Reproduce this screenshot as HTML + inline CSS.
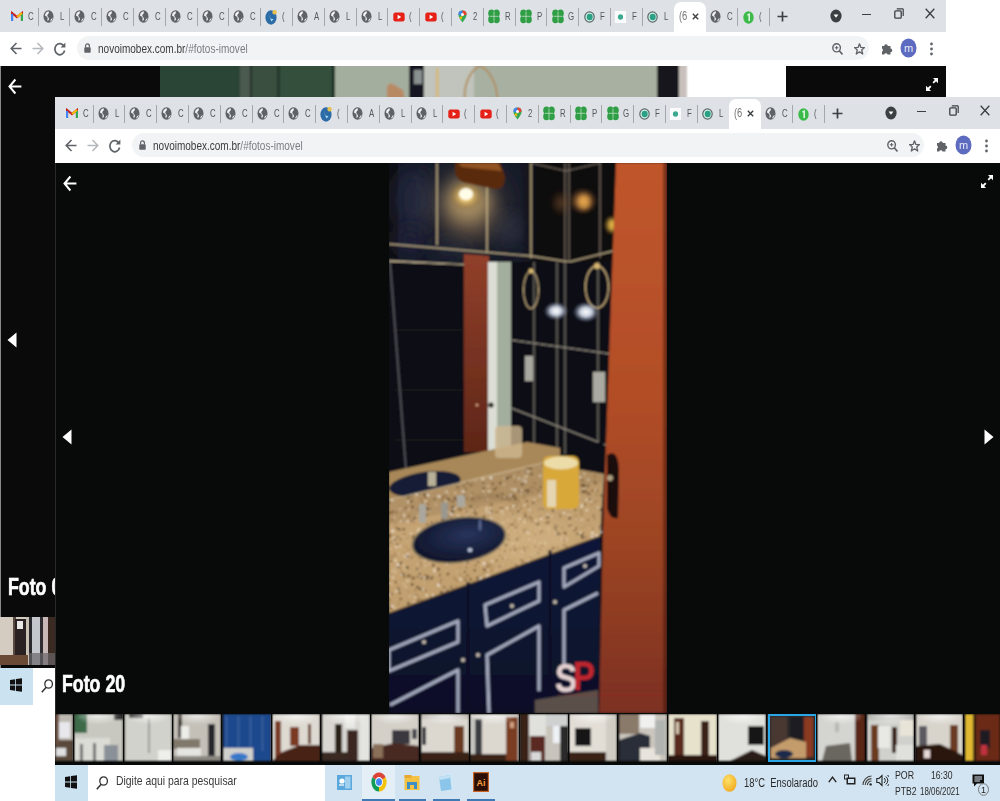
<!DOCTYPE html><html><head><meta charset="utf-8"><style>html,body{margin:0;padding:0;}body{width:1000px;height:801px;position:relative;overflow:hidden;background:#fff;font-family:'Liberation Sans',sans-serif;}#wrap{position:absolute;left:0;top:0;width:1000px;height:801px;filter:blur(0.45px)}</style></head><body><div id="wrap"><div style="position:absolute;left:0px;top:0px;width:946px;height:705px;overflow:hidden"><div style="position:absolute;left:0px;top:0px;width:946px;height:32px;background:#dee1e6"></div><svg style="position:absolute;left:11.2px;top:11px;" width="12" height="11" viewBox="0 0 12 11"><path d="M1 10V2L6 6L11 2V10" fill="none" stroke="#c5221f" stroke-width="2.2"/><path d="M1 10V3" stroke="#4285f4" stroke-width="2.2"/><path d="M11 10V3" stroke="#34a853" stroke-width="2.2"/><path d="M6 6L11 2" stroke="#fbbc04" stroke-width="2"/></svg><div style="position:absolute;left:27.7px;top:11px;font-family:'Liberation Sans',sans-serif;font-size:11.5px;line-height:11.5px;font-weight:400;color:#55595d;white-space:nowrap;transform:scaleX(0.68);transform-origin:0 0;">C</div><div style="position:absolute;left:37.5px;top:7.5px;width:1px;height:18px;background:#a4a8ad"></div><svg style="position:absolute;left:42.5px;top:9.7px;" width="11" height="13" viewBox="0 0 11 13"><ellipse cx="5.5" cy="6.5" rx="5" ry="6.2" fill="#5f6368"/><path d="M5.6 1.2C3.6 1.6 2 3.4 2 5.6C3 6.4 4.4 6.6 4.6 8C4.8 9 4.2 10 4.6 11C6 10.2 6.4 9 5.6 7.8C5 6.8 3.6 6 4.6 4.6C5.4 3.8 6.4 3 5.6 1.2Z" fill="#f2f3f5"/><path d="M9.6 8C8.6 8.6 7.4 9.6 7.2 11.4C8.4 11 9.4 9.8 9.6 8Z" fill="#f2f3f5"/></svg><div style="position:absolute;left:59.5px;top:11px;font-family:'Liberation Sans',sans-serif;font-size:11.5px;line-height:11.5px;font-weight:400;color:#55595d;white-space:nowrap;transform:scaleX(0.68);transform-origin:0 0;">L</div><div style="position:absolute;left:69.3px;top:7.5px;width:1px;height:18px;background:#a4a8ad"></div><svg style="position:absolute;left:74.3px;top:9.7px;" width="11" height="13" viewBox="0 0 11 13"><ellipse cx="5.5" cy="6.5" rx="5" ry="6.2" fill="#5f6368"/><path d="M5.6 1.2C3.6 1.6 2 3.4 2 5.6C3 6.4 4.4 6.6 4.6 8C4.8 9 4.2 10 4.6 11C6 10.2 6.4 9 5.6 7.8C5 6.8 3.6 6 4.6 4.6C5.4 3.8 6.4 3 5.6 1.2Z" fill="#f2f3f5"/><path d="M9.6 8C8.6 8.6 7.4 9.6 7.2 11.4C8.4 11 9.4 9.8 9.6 8Z" fill="#f2f3f5"/></svg><div style="position:absolute;left:91.3px;top:11px;font-family:'Liberation Sans',sans-serif;font-size:11.5px;line-height:11.5px;font-weight:400;color:#55595d;white-space:nowrap;transform:scaleX(0.68);transform-origin:0 0;">C</div><div style="position:absolute;left:101.1px;top:7.5px;width:1px;height:18px;background:#a4a8ad"></div><svg style="position:absolute;left:106.1px;top:9.7px;" width="11" height="13" viewBox="0 0 11 13"><ellipse cx="5.5" cy="6.5" rx="5" ry="6.2" fill="#5f6368"/><path d="M5.6 1.2C3.6 1.6 2 3.4 2 5.6C3 6.4 4.4 6.6 4.6 8C4.8 9 4.2 10 4.6 11C6 10.2 6.4 9 5.6 7.8C5 6.8 3.6 6 4.6 4.6C5.4 3.8 6.4 3 5.6 1.2Z" fill="#f2f3f5"/><path d="M9.6 8C8.6 8.6 7.4 9.6 7.2 11.4C8.4 11 9.4 9.8 9.6 8Z" fill="#f2f3f5"/></svg><div style="position:absolute;left:123.1px;top:11px;font-family:'Liberation Sans',sans-serif;font-size:11.5px;line-height:11.5px;font-weight:400;color:#55595d;white-space:nowrap;transform:scaleX(0.68);transform-origin:0 0;">C</div><div style="position:absolute;left:132.9px;top:7.5px;width:1px;height:18px;background:#a4a8ad"></div><svg style="position:absolute;left:137.9px;top:9.7px;" width="11" height="13" viewBox="0 0 11 13"><ellipse cx="5.5" cy="6.5" rx="5" ry="6.2" fill="#5f6368"/><path d="M5.6 1.2C3.6 1.6 2 3.4 2 5.6C3 6.4 4.4 6.6 4.6 8C4.8 9 4.2 10 4.6 11C6 10.2 6.4 9 5.6 7.8C5 6.8 3.6 6 4.6 4.6C5.4 3.8 6.4 3 5.6 1.2Z" fill="#f2f3f5"/><path d="M9.6 8C8.6 8.6 7.4 9.6 7.2 11.4C8.4 11 9.4 9.8 9.6 8Z" fill="#f2f3f5"/></svg><div style="position:absolute;left:154.9px;top:11px;font-family:'Liberation Sans',sans-serif;font-size:11.5px;line-height:11.5px;font-weight:400;color:#55595d;white-space:nowrap;transform:scaleX(0.68);transform-origin:0 0;">C</div><div style="position:absolute;left:164.7px;top:7.5px;width:1px;height:18px;background:#a4a8ad"></div><svg style="position:absolute;left:169.7px;top:9.7px;" width="11" height="13" viewBox="0 0 11 13"><ellipse cx="5.5" cy="6.5" rx="5" ry="6.2" fill="#5f6368"/><path d="M5.6 1.2C3.6 1.6 2 3.4 2 5.6C3 6.4 4.4 6.6 4.6 8C4.8 9 4.2 10 4.6 11C6 10.2 6.4 9 5.6 7.8C5 6.8 3.6 6 4.6 4.6C5.4 3.8 6.4 3 5.6 1.2Z" fill="#f2f3f5"/><path d="M9.6 8C8.6 8.6 7.4 9.6 7.2 11.4C8.4 11 9.4 9.8 9.6 8Z" fill="#f2f3f5"/></svg><div style="position:absolute;left:186.7px;top:11px;font-family:'Liberation Sans',sans-serif;font-size:11.5px;line-height:11.5px;font-weight:400;color:#55595d;white-space:nowrap;transform:scaleX(0.68);transform-origin:0 0;">C</div><div style="position:absolute;left:196.5px;top:7.5px;width:1px;height:18px;background:#a4a8ad"></div><svg style="position:absolute;left:201.5px;top:9.7px;" width="11" height="13" viewBox="0 0 11 13"><ellipse cx="5.5" cy="6.5" rx="5" ry="6.2" fill="#5f6368"/><path d="M5.6 1.2C3.6 1.6 2 3.4 2 5.6C3 6.4 4.4 6.6 4.6 8C4.8 9 4.2 10 4.6 11C6 10.2 6.4 9 5.6 7.8C5 6.8 3.6 6 4.6 4.6C5.4 3.8 6.4 3 5.6 1.2Z" fill="#f2f3f5"/><path d="M9.6 8C8.6 8.6 7.4 9.6 7.2 11.4C8.4 11 9.4 9.8 9.6 8Z" fill="#f2f3f5"/></svg><div style="position:absolute;left:218.5px;top:11px;font-family:'Liberation Sans',sans-serif;font-size:11.5px;line-height:11.5px;font-weight:400;color:#55595d;white-space:nowrap;transform:scaleX(0.68);transform-origin:0 0;">C</div><div style="position:absolute;left:228.3px;top:7.5px;width:1px;height:18px;background:#a4a8ad"></div><svg style="position:absolute;left:233.3px;top:9.7px;" width="11" height="13" viewBox="0 0 11 13"><ellipse cx="5.5" cy="6.5" rx="5" ry="6.2" fill="#5f6368"/><path d="M5.6 1.2C3.6 1.6 2 3.4 2 5.6C3 6.4 4.4 6.6 4.6 8C4.8 9 4.2 10 4.6 11C6 10.2 6.4 9 5.6 7.8C5 6.8 3.6 6 4.6 4.6C5.4 3.8 6.4 3 5.6 1.2Z" fill="#f2f3f5"/><path d="M9.6 8C8.6 8.6 7.4 9.6 7.2 11.4C8.4 11 9.4 9.8 9.6 8Z" fill="#f2f3f5"/></svg><div style="position:absolute;left:250.3px;top:11px;font-family:'Liberation Sans',sans-serif;font-size:11.5px;line-height:11.5px;font-weight:400;color:#55595d;white-space:nowrap;transform:scaleX(0.68);transform-origin:0 0;">C</div><div style="position:absolute;left:260.1px;top:7.5px;width:1px;height:18px;background:#a4a8ad"></div><svg style="position:absolute;left:265.1px;top:8.5px;" width="13" height="16" viewBox="0 0 13 16"><ellipse cx="6" cy="8.5" rx="5.6" ry="7.2" fill="#2c6ca6"/><path d="M3.6 5L5.6 9.5L8.6 10.2L6.4 12.4Z" fill="#a6daf6"/><circle cx="9.6" cy="3.2" r="2.2" fill="#e8c050"/></svg><div style="position:absolute;left:282.1px;top:11px;font-family:'Liberation Sans',sans-serif;font-size:11.5px;line-height:11.5px;font-weight:400;color:#55595d;white-space:nowrap;transform:scaleX(0.68);transform-origin:0 0;">(</div><div style="position:absolute;left:291.9px;top:7.5px;width:1px;height:18px;background:#a4a8ad"></div><svg style="position:absolute;left:296.9px;top:9.7px;" width="11" height="13" viewBox="0 0 11 13"><ellipse cx="5.5" cy="6.5" rx="5" ry="6.2" fill="#5f6368"/><path d="M5.6 1.2C3.6 1.6 2 3.4 2 5.6C3 6.4 4.4 6.6 4.6 8C4.8 9 4.2 10 4.6 11C6 10.2 6.4 9 5.6 7.8C5 6.8 3.6 6 4.6 4.6C5.4 3.8 6.4 3 5.6 1.2Z" fill="#f2f3f5"/><path d="M9.6 8C8.6 8.6 7.4 9.6 7.2 11.4C8.4 11 9.4 9.8 9.6 8Z" fill="#f2f3f5"/></svg><div style="position:absolute;left:313.9px;top:11px;font-family:'Liberation Sans',sans-serif;font-size:11.5px;line-height:11.5px;font-weight:400;color:#55595d;white-space:nowrap;transform:scaleX(0.68);transform-origin:0 0;">A</div><div style="position:absolute;left:323.7px;top:7.5px;width:1px;height:18px;background:#a4a8ad"></div><svg style="position:absolute;left:328.7px;top:9.7px;" width="11" height="13" viewBox="0 0 11 13"><ellipse cx="5.5" cy="6.5" rx="5" ry="6.2" fill="#5f6368"/><path d="M5.6 1.2C3.6 1.6 2 3.4 2 5.6C3 6.4 4.4 6.6 4.6 8C4.8 9 4.2 10 4.6 11C6 10.2 6.4 9 5.6 7.8C5 6.8 3.6 6 4.6 4.6C5.4 3.8 6.4 3 5.6 1.2Z" fill="#f2f3f5"/><path d="M9.6 8C8.6 8.6 7.4 9.6 7.2 11.4C8.4 11 9.4 9.8 9.6 8Z" fill="#f2f3f5"/></svg><div style="position:absolute;left:345.7px;top:11px;font-family:'Liberation Sans',sans-serif;font-size:11.5px;line-height:11.5px;font-weight:400;color:#55595d;white-space:nowrap;transform:scaleX(0.68);transform-origin:0 0;">L</div><div style="position:absolute;left:355.5px;top:7.5px;width:1px;height:18px;background:#a4a8ad"></div><svg style="position:absolute;left:360.5px;top:9.7px;" width="11" height="13" viewBox="0 0 11 13"><ellipse cx="5.5" cy="6.5" rx="5" ry="6.2" fill="#5f6368"/><path d="M5.6 1.2C3.6 1.6 2 3.4 2 5.6C3 6.4 4.4 6.6 4.6 8C4.8 9 4.2 10 4.6 11C6 10.2 6.4 9 5.6 7.8C5 6.8 3.6 6 4.6 4.6C5.4 3.8 6.4 3 5.6 1.2Z" fill="#f2f3f5"/><path d="M9.6 8C8.6 8.6 7.4 9.6 7.2 11.4C8.4 11 9.4 9.8 9.6 8Z" fill="#f2f3f5"/></svg><div style="position:absolute;left:377.5px;top:11px;font-family:'Liberation Sans',sans-serif;font-size:11.5px;line-height:11.5px;font-weight:400;color:#55595d;white-space:nowrap;transform:scaleX(0.68);transform-origin:0 0;">L</div><div style="position:absolute;left:387.3px;top:7.5px;width:1px;height:18px;background:#a4a8ad"></div><svg style="position:absolute;left:392.8px;top:12px;" width="12" height="10" viewBox="0 0 12 10"><rect x="0.3" y="0.5" width="11.4" height="9" rx="2.2" fill="#e62117"/><path d="M4.6 2.8L8.2 5L4.6 7.2Z" fill="#fff"/></svg><div style="position:absolute;left:409.3px;top:11px;font-family:'Liberation Sans',sans-serif;font-size:11.5px;line-height:11.5px;font-weight:400;color:#55595d;white-space:nowrap;transform:scaleX(0.68);transform-origin:0 0;">(</div><div style="position:absolute;left:419.1px;top:7.5px;width:1px;height:18px;background:#a4a8ad"></div><svg style="position:absolute;left:424.6px;top:12px;" width="12" height="10" viewBox="0 0 12 10"><rect x="0.3" y="0.5" width="11.4" height="9" rx="2.2" fill="#e62117"/><path d="M4.6 2.8L8.2 5L4.6 7.2Z" fill="#fff"/></svg><div style="position:absolute;left:441.1px;top:11px;font-family:'Liberation Sans',sans-serif;font-size:11.5px;line-height:11.5px;font-weight:400;color:#55595d;white-space:nowrap;transform:scaleX(0.68);transform-origin:0 0;">(</div><div style="position:absolute;left:450.9px;top:7.5px;width:1px;height:18px;background:#a4a8ad"></div><svg style="position:absolute;left:458.4px;top:10px;" width="9" height="13" viewBox="0 0 9 13"><path d="M4.5 12.6C2.5 9.8 0.4 7.4 0.4 4.6A4.1 4.1 0 0 1 8.6 4.6C8.6 7.4 6.5 9.8 4.5 12.6Z" fill="#34a853"/><path d="M0.4 4.6A4.1 4.1 0 0 1 4.5 0.5L4.5 6Z" fill="#4285f4"/><path d="M4.5 0.5A4.1 4.1 0 0 1 8.6 4.6L4.5 6Z" fill="#ea4335"/><path d="M1.2 7.3L4.5 6L3.3 9.8Z" fill="#fbbc04"/><circle cx="4.5" cy="4.6" r="1.5" fill="#fff"/></svg><div style="position:absolute;left:472.9px;top:11px;font-family:'Liberation Sans',sans-serif;font-size:11.5px;line-height:11.5px;font-weight:400;color:#55595d;white-space:nowrap;transform:scaleX(0.68);transform-origin:0 0;">2</div><div style="position:absolute;left:482.7px;top:7.5px;width:1px;height:18px;background:#a4a8ad"></div><svg style="position:absolute;left:488.2px;top:9px;" width="12" height="15" viewBox="0 0 12 15"><g fill="#2f9e44"><ellipse cx="3.4" cy="4.2" rx="3.2" ry="3.8"/><ellipse cx="8.6" cy="4.2" rx="3.2" ry="3.8"/><ellipse cx="3.4" cy="10.4" rx="3.2" ry="3.8"/><ellipse cx="8.6" cy="10.4" rx="3.2" ry="3.8"/><rect x="2" y="4" width="8" height="7"/></g><path d="M6 2.5V12.5M1.8 7.3H10.2" stroke="#cfe8d2" stroke-width="0.7"/></svg><div style="position:absolute;left:504.7px;top:11px;font-family:'Liberation Sans',sans-serif;font-size:11.5px;line-height:11.5px;font-weight:400;color:#55595d;white-space:nowrap;transform:scaleX(0.68);transform-origin:0 0;">R</div><div style="position:absolute;left:514.5px;top:7.5px;width:1px;height:18px;background:#a4a8ad"></div><svg style="position:absolute;left:520.0px;top:9px;" width="12" height="15" viewBox="0 0 12 15"><g fill="#2f9e44"><ellipse cx="3.4" cy="4.2" rx="3.2" ry="3.8"/><ellipse cx="8.6" cy="4.2" rx="3.2" ry="3.8"/><ellipse cx="3.4" cy="10.4" rx="3.2" ry="3.8"/><ellipse cx="8.6" cy="10.4" rx="3.2" ry="3.8"/><rect x="2" y="4" width="8" height="7"/></g><path d="M6 2.5V12.5M1.8 7.3H10.2" stroke="#cfe8d2" stroke-width="0.7"/></svg><div style="position:absolute;left:536.5px;top:11px;font-family:'Liberation Sans',sans-serif;font-size:11.5px;line-height:11.5px;font-weight:400;color:#55595d;white-space:nowrap;transform:scaleX(0.68);transform-origin:0 0;">P</div><div style="position:absolute;left:546.3px;top:7.5px;width:1px;height:18px;background:#a4a8ad"></div><svg style="position:absolute;left:551.8px;top:9px;" width="12" height="15" viewBox="0 0 12 15"><g fill="#2f9e44"><ellipse cx="3.4" cy="4.2" rx="3.2" ry="3.8"/><ellipse cx="8.6" cy="4.2" rx="3.2" ry="3.8"/><ellipse cx="3.4" cy="10.4" rx="3.2" ry="3.8"/><ellipse cx="8.6" cy="10.4" rx="3.2" ry="3.8"/><rect x="2" y="4" width="8" height="7"/></g><path d="M6 2.5V12.5M1.8 7.3H10.2" stroke="#cfe8d2" stroke-width="0.7"/></svg><div style="position:absolute;left:568.3px;top:11px;font-family:'Liberation Sans',sans-serif;font-size:11.5px;line-height:11.5px;font-weight:400;color:#55595d;white-space:nowrap;transform:scaleX(0.68);transform-origin:0 0;">G</div><div style="position:absolute;left:578.1px;top:7.5px;width:1px;height:18px;background:#a4a8ad"></div><svg style="position:absolute;left:583.6px;top:11px;" width="11" height="12" viewBox="0 0 11 12"><ellipse cx="5.5" cy="6" rx="4.7" ry="5.1" fill="#d6efe8" stroke="#5a6a68" stroke-width="1.2"/><ellipse cx="5.7" cy="6" rx="3" ry="3.3" fill="#2aa085"/></svg><div style="position:absolute;left:600.1px;top:11px;font-family:'Liberation Sans',sans-serif;font-size:11.5px;line-height:11.5px;font-weight:400;color:#55595d;white-space:nowrap;transform:scaleX(0.68);transform-origin:0 0;">F</div><div style="position:absolute;left:609.9px;top:7.5px;width:1px;height:18px;background:#a4a8ad"></div><svg style="position:absolute;left:615.4px;top:11px;" width="11" height="12" viewBox="0 0 11 12"><rect x="0" y="0" width="11" height="12" fill="#fbfbfb"/><ellipse cx="5.5" cy="6" rx="2.6" ry="2.8" fill="#3aa98f"/></svg><div style="position:absolute;left:631.9px;top:11px;font-family:'Liberation Sans',sans-serif;font-size:11.5px;line-height:11.5px;font-weight:400;color:#55595d;white-space:nowrap;transform:scaleX(0.68);transform-origin:0 0;">F</div><div style="position:absolute;left:641.7px;top:7.5px;width:1px;height:18px;background:#a4a8ad"></div><svg style="position:absolute;left:647.2px;top:11px;" width="11" height="12" viewBox="0 0 11 12"><ellipse cx="5.5" cy="6" rx="4.7" ry="5.1" fill="#d6efe8" stroke="#5a6a68" stroke-width="1.2"/><ellipse cx="5.7" cy="6" rx="3" ry="3.3" fill="#2aa085"/></svg><div style="position:absolute;left:663.7px;top:11px;font-family:'Liberation Sans',sans-serif;font-size:11.5px;line-height:11.5px;font-weight:400;color:#55595d;white-space:nowrap;transform:scaleX(0.68);transform-origin:0 0;">L</div><div style="position:absolute;left:673.5px;top:2px;width:32.2px;height:30px;background:#fff;border-radius:7px 7px 0 0"></div><div style="position:absolute;left:679.0px;top:10px;font-family:'Liberation Sans',sans-serif;font-size:12px;line-height:12px;font-weight:400;color:#777;white-space:nowrap;transform:scaleX(0.78);transform-origin:0 0;">(6</div><svg style="position:absolute;left:692.0px;top:12.5px;" width="7" height="7" viewBox="0 0 7 7"><path d="M0.8 0.8L6.2 6.2M6.2 0.8L0.8 6.2" stroke="#3c4043" stroke-width="1.4"/></svg><svg style="position:absolute;left:710.3px;top:9.7px;" width="11" height="13" viewBox="0 0 11 13"><ellipse cx="5.5" cy="6.5" rx="5" ry="6.2" fill="#5f6368"/><path d="M5.6 1.2C3.6 1.6 2 3.4 2 5.6C3 6.4 4.4 6.6 4.6 8C4.8 9 4.2 10 4.6 11C6 10.2 6.4 9 5.6 7.8C5 6.8 3.6 6 4.6 4.6C5.4 3.8 6.4 3 5.6 1.2Z" fill="#f2f3f5"/><path d="M9.6 8C8.6 8.6 7.4 9.6 7.2 11.4C8.4 11 9.4 9.8 9.6 8Z" fill="#f2f3f5"/></svg><div style="position:absolute;left:727.3px;top:11px;font-family:'Liberation Sans',sans-serif;font-size:11.5px;line-height:11.5px;font-weight:400;color:#55595d;white-space:nowrap;transform:scaleX(0.68);transform-origin:0 0;">C</div><div style="position:absolute;left:737.1px;top:7.5px;width:1px;height:18px;background:#a4a8ad"></div><svg style="position:absolute;left:742.6px;top:11px;" width="11" height="13" viewBox="0 0 11 13"><ellipse cx="5.5" cy="6.5" rx="5.2" ry="6.2" fill="#3dbb4a"/><path d="M4.4 4.2L6.2 3.2V10" fill="none" stroke="#e6f7e7" stroke-width="1.5"/></svg><div style="position:absolute;left:759.1px;top:11px;font-family:'Liberation Sans',sans-serif;font-size:11.5px;line-height:11.5px;font-weight:400;color:#55595d;white-space:nowrap;transform:scaleX(0.68);transform-origin:0 0;">(</div><div style="position:absolute;left:768.9px;top:7.5px;width:1px;height:18px;background:#a4a8ad"></div><svg style="position:absolute;left:777px;top:11px;" width="11" height="11" viewBox="0 0 11 11"><path d="M5.5 0.5V10.5M0.5 5.5H10.5" stroke="#3c4043" stroke-width="1.7"/></svg><svg style="position:absolute;left:830px;top:9px;" width="12" height="14" viewBox="0 0 12 14"><ellipse cx="6" cy="7" rx="5.6" ry="6.5" fill="#3c4043"/><path d="M3.6 5.6H8.4L6 8.8Z" fill="#fff"/></svg><div style="position:absolute;left:862px;top:14px;width:9px;height:1.3px;background:#3c4043"></div><svg style="position:absolute;left:894px;top:8px;" width="10" height="11" viewBox="0 0 10 11"><rect x="0.8" y="2.8" width="6.4" height="7.4" fill="none" stroke="#3c4043" stroke-width="1.3" rx="1"/><path d="M2.8 0.8H8.4Q9.2 0.8 9.2 1.6V8" fill="none" stroke="#3c4043" stroke-width="1.2"/></svg><svg style="position:absolute;left:925px;top:8px;" width="10" height="11" viewBox="0 0 10 11"><path d="M0.7 0.7L9.3 10.3M9.3 0.7L0.7 10.3" stroke="#3c4043" stroke-width="1.3"/></svg><div style="position:absolute;left:0px;top:32px;width:946px;height:34px;background:#fff"></div><svg style="position:absolute;left:10px;top:42px;" width="12" height="13" viewBox="0 0 12 13"><path d="M11.5 6.5H1.5M6.5 1L1.2 6.5L6.5 12" fill="none" stroke="#5f6368" stroke-width="1.6"/></svg><svg style="position:absolute;left:32px;top:42px;" width="12" height="13" viewBox="0 0 12 13"><path d="M0.5 6.5H10.5M5.5 1L10.8 6.5L5.5 12" fill="none" stroke="#b4b7bb" stroke-width="1.5"/></svg><svg style="position:absolute;left:54px;top:42px;" width="12" height="14" viewBox="0 0 12 14"><path d="M10 4.2A4.9 5.6 0 1 0 10.6 8.5" fill="none" stroke="#5f6368" stroke-width="1.7"/><path d="M11.4 0.6V5.6H6.6Z" fill="#5f6368"/></svg><div style="position:absolute;left:77px;top:36px;width:792px;height:24px;background:#f1f3f4;border-radius:12px"></div><svg style="position:absolute;left:84px;top:43px;" width="7" height="10" viewBox="0 0 7 10"><path d="M1.6 4.5V3A1.9 2.2 0 0 1 5.4 3V4.5" fill="none" stroke="#5f6368" stroke-width="1.2"/><rect x="0.3" y="4.3" width="6.4" height="5.5" rx="0.8" fill="#5f6368"/></svg><div style="position:absolute;left:98px;top:42px;font-family:'Liberation Sans',sans-serif;font-size:13px;line-height:13px;font-weight:400;color:#3c3c3c;white-space:nowrap;transform:scaleX(0.77);transform-origin:0 0;"><span style="color:#3c3c3c">novoimobex.com.br</span><span style="color:#7a7e82">/#fotos-imovel</span></div><svg style="position:absolute;left:832px;top:43px;" width="11" height="12" viewBox="0 0 11 12"><ellipse cx="4.6" cy="4.8" rx="3.8" ry="4.1" fill="none" stroke="#5f6368" stroke-width="1.4"/><path d="M7.3 7.8L10.4 11.4" stroke="#5f6368" stroke-width="1.6"/><path d="M4.6 3V6.6M2.8 4.8H6.4" stroke="#5f6368" stroke-width="1.1"/></svg><svg style="position:absolute;left:854px;top:43px;" width="11" height="12" viewBox="0 0 11 12"><path d="M5.5 0.8L6.9 4.4L10.5 4.6L7.7 7L8.7 11L5.5 8.8L2.3 11L3.3 7L0.5 4.6L4.1 4.4Z" fill="none" stroke="#5f6368" stroke-width="1.3" stroke-linejoin="round"/></svg><svg style="position:absolute;left:881px;top:42px;" width="12" height="13" viewBox="0 0 12 13"><path d="M1 4H3.2A1.8 1.8 0 0 1 6.8 4H9.5V6.6A1.8 1.8 0 0 1 9.5 10.2V12.5H6.6A1.8 1.8 0 0 0 3.2 12.5H1V9.6A1.8 1.8 0 0 0 1 6.4Z" fill="#5f6368"/></svg><svg style="position:absolute;left:900px;top:38px;" width="17" height="20" viewBox="0 0 17 20"><ellipse cx="8.5" cy="10" rx="8" ry="9.6" fill="#5c6bc0"/><text x="8.5" y="13.6" text-anchor="middle" font-family="Liberation Sans" font-size="11" fill="#e8eaf6">m</text></svg><svg style="position:absolute;left:929px;top:42px;" width="5" height="14" viewBox="0 0 5 14"><circle cx="2.5" cy="2" r="1.4" fill="#5f6368"/><circle cx="2.5" cy="7" r="1.4" fill="#5f6368"/><circle cx="2.5" cy="12" r="1.4" fill="#5f6368"/></svg><div style="position:absolute;left:0px;top:66px;width:946px;height:639px;background:#0a0a0a"></div><svg style="position:absolute;left:160px;top:66px;" width="626" height="32" viewBox="0 0 626 32"><defs><filter id="ob"><feGaussianBlur stdDeviation="0.8"/></filter></defs><g filter="url(#ob)"><rect x="-2" y="-2" width="630" height="36" fill="#a8b0a2"/><rect x="-2" y="-2" width="82" height="36" fill="#2c4434"/><rect x="80" y="-2" width="10" height="36" fill="#4c5a50"/><rect x="90" y="-2" width="2" height="36" fill="#1e2a22"/><rect x="92" y="-2" width="25" height="36" fill="#3a5040"/><rect x="117" y="-2" width="3" height="36" fill="#22342a"/><rect x="120" y="-2" width="52" height="36" fill="#34503c"/><rect x="172" y="-2" width="3" height="36" fill="#18281e"/><rect x="175" y="-2" width="74" height="36" fill="#a4ae9e"/><polygon points="227,20 231,17 243,24 245,34 227,34" fill="#b88a64"/><rect x="249" y="-2" width="15" height="36" fill="#141820"/><rect x="254" y="4" width="8" height="14" fill="#8a9090"/><rect x="264" y="-2" width="50" height="36" fill="#c0c4bc"/><rect x="276" y="2" width="2.5" height="32" fill="#d8b870"/><path d="M305 34C303 20 310 4 320 0C330 4 338 20 337 34" fill="none" stroke="#b09060" stroke-width="2"/><rect x="314" y="-2" width="183" height="36" fill="#a8b0a2" opacity="0"/><rect x="497" y="-2" width="22" height="36" fill="#18181e"/><rect x="519" y="-2" width="8" height="36" fill="#c8c0bc"/><rect x="527" y="-2" width="101" height="36" fill="#ffffff"/></g></svg><svg style="position:absolute;left:8px;top:78px;" width="14" height="17" viewBox="0 0 14 17"><path d="M13.4 8.5H1.8M7.4 1.5L1.5 8.5L7.4 15.5" fill="none" stroke="#fff" stroke-width="2"/></svg><svg style="position:absolute;left:925px;top:77px;" width="14" height="15" viewBox="0 0 14 15"><path d="M8 1H13V6.2Z M6 14H1V8.8Z" fill="#fff"/><path d="M12 2L8.2 5.8M2 13L5.8 9.2" stroke="#fff" stroke-width="1.8"/></svg><svg style="position:absolute;left:7px;top:332px;" width="10" height="16" viewBox="0 0 10 16"><path d="M9.5 0.5V15.5L0.5 8Z" fill="#fff"/></svg><svg style="position:absolute;left:929px;top:332px;" width="10" height="16" viewBox="0 0 10 16"><path d="M0.5 0.5V15.5L9.5 8Z" fill="#fff"/></svg><div style="position:absolute;left:0px;top:66px;width:1px;height:639px;background:#8a8a8a"></div><div style="position:absolute;left:8px;top:575px;font-family:'Liberation Sans',sans-serif;font-size:24px;line-height:24px;font-weight:700;color:#fff;white-space:nowrap;transform:scaleX(0.74);transform-origin:0 0;-webkit-text-stroke:0.7px #fff;">Foto 0</div><svg style="position:absolute;left:0px;top:617px;" width="55" height="48" viewBox="0 0 55 48"><defs><filter id="otb"><feGaussianBlur stdDeviation="0.7"/></filter></defs><g filter="url(#otb)"><rect x="-2" y="-2" width="60" height="52" fill="#d4ccc0"/><rect x="13" y="-2" width="3" height="52" fill="#5a4a40"/><rect x="15" y="2" width="11" height="44" fill="#2a2220"/><rect x="17" y="4" width="6" height="8" fill="#e8e8e8"/><rect x="26" y="-2" width="3" height="52" fill="#c8c0b4"/><rect x="29" y="-2" width="3" height="52" fill="#2a2a2e"/><rect x="32" y="-2" width="8" height="52" fill="#c4c8cc"/><rect x="40" y="-2" width="3" height="52" fill="#2e2e32"/><rect x="43" y="-2" width="5" height="52" fill="#c8b8b8"/><rect x="48" y="-2" width="9" height="52" fill="#3a2a24"/><rect x="-2" y="38" width="30" height="12" fill="#6a4a36"/><rect x="29" y="36" width="28" height="12" fill="#6a6468" opacity="0.7"/></g></svg><div style="position:absolute;left:0px;top:668px;width:946px;height:37px;background:#d2e4f1"></div><div style="position:absolute;left:0px;top:668px;width:33px;height:37px;background:#cbe3f1"></div><div style="position:absolute;left:33px;top:668px;width:237px;height:37px;background:#fff"></div><svg style="position:absolute;left:10px;top:678px;" width="12" height="14" viewBox="0 0 12 14"><g fill="#111"><path d="M0 2L5.2 1.2V6.6H0Z"/><path d="M6 1.1L12 0.2V6.6H6Z"/><path d="M0 7.4H5.2V12.8L0 12Z"/><path d="M6 7.4H12V13.8L6 12.9Z"/></g></svg><svg style="position:absolute;left:41px;top:679px;" width="12" height="14" viewBox="0 0 12 14"><ellipse cx="7.6" cy="5" rx="3.8" ry="4.2" fill="none" stroke="#333" stroke-width="1.3"/><path d="M5.2 8.2L0.8 13.2" stroke="#333" stroke-width="1.5"/></svg><div style="position:absolute;left:61px;top:677px;font-family:'Liberation Sans',sans-serif;font-size:13px;line-height:13px;font-weight:400;color:#3a3a3a;white-space:nowrap;transform:scaleX(0.8);transform-origin:0 0;">Digite aqui para pesquisar</div><svg style="position:absolute;left:282px;top:678px;" width="15" height="15" viewBox="0 0 15 15"><rect x="0" y="0" width="15" height="15" fill="#5aa8dc"/><rect x="8" y="1.5" width="5.5" height="12" fill="#9fd0ef"/><circle cx="5" cy="6" r="2.6" fill="#fff"/><path d="M2 10H7" stroke="#fff" stroke-width="1.2"/></svg><div style="position:absolute;left:307px;top:668px;width:33px;height:37px;background:#e4eef6"></div><svg style="position:absolute;left:316px;top:675px;" width="16" height="20" viewBox="0 0 16 20"><path d="M8 10L1.42 5.20A7.6 9.6 0 0 1 14.58 5.20Z" fill="#db4437"/><path d="M8 10L14.58 5.20A7.6 9.6 0 0 1 8.00 19.60Z" fill="#f4c20d"/><path d="M8 10L8.00 19.60A7.6 9.6 0 0 1 1.42 5.20Z" fill="#0f9d58"/><ellipse cx="8" cy="10" rx="3.9" ry="4.9" fill="#fff"/><ellipse cx="8" cy="10" rx="3" ry="3.8" fill="#4285f4"/></svg><svg style="position:absolute;left:349px;top:676.5px;" width="16" height="17" viewBox="0 0 16 17"><rect x="0.5" y="2" width="15" height="14" fill="#f3c242"/><rect x="0.5" y="1" width="7" height="3" fill="#e8a932"/><rect x="3" y="8" width="10" height="7" fill="#3d8fc8"/><rect x="6" y="11" width="4" height="4" fill="#f3c242"/></svg><svg style="position:absolute;left:383px;top:676px;" width="17" height="18" viewBox="0 0 17 18"><path d="M4 2L15 0.5L16.5 15L6 17.5Z" fill="#cfe6f5"/><path d="M1 4L12 2L13.5 16.5L3 18Z" fill="#8cc5ea"/><path d="M1 4L12 2L12.3 5L1.4 7Z" fill="#bfe0f5"/></svg><svg style="position:absolute;left:418px;top:675px;" width="16" height="20" viewBox="0 0 16 20"><rect x="0" y="0" width="16" height="20" fill="#c8662a"/><rect x="1.2" y="1.2" width="13.6" height="17.6" fill="#2c0f04"/><text x="8" y="14" text-anchor="middle" font-family="Liberation Sans" font-weight="700" font-size="9" fill="#f7a03c">Ai</text></svg><div style="position:absolute;left:307px;top:702px;width:33px;height:3px;background:#3f7ab5"></div><div style="position:absolute;left:344px;top:702px;width:27px;height:3px;background:#3f7ab5"></div><div style="position:absolute;left:378px;top:702px;width:27px;height:3px;background:#3f7ab5"></div><div style="position:absolute;left:412px;top:702px;width:28px;height:3px;background:#3f7ab5"></div><svg style="position:absolute;left:667px;top:676.5px;" width="15" height="18" viewBox="0 0 15 18"><defs><radialGradient id="sun" cx="0.4" cy="0.35" r="0.7"><stop offset="0" stop-color="#fde26a"/><stop offset="1" stop-color="#f2a81e"/></radialGradient></defs><ellipse cx="7.5" cy="9" rx="7" ry="8.8" fill="url(#sun)"/></svg><div style="position:absolute;left:689px;top:680px;font-family:'Liberation Sans',sans-serif;font-size:12px;line-height:12px;font-weight:400;color:#2a2a2a;white-space:nowrap;transform:scaleX(0.785);transform-origin:0 0;">18°C&nbsp;&nbsp;Ensolarado</div><svg style="position:absolute;left:773px;top:679px;" width="9" height="7" viewBox="0 0 9 7"><path d="M0.8 6.2L4.5 1.2L8.2 6.2" fill="none" stroke="#222" stroke-width="1.4"/></svg><svg style="position:absolute;left:789px;top:677px;" width="12" height="12" viewBox="0 0 12 12"><rect x="2.5" y="3.5" width="9" height="7" fill="#222"/><rect x="0.5" y="1" width="4" height="4" fill="none" stroke="#222" stroke-width="1"/><rect x="4" y="5" width="6" height="4" fill="#d2e4f1"/></svg><svg style="position:absolute;left:807px;top:678px;" width="10" height="11" viewBox="0 0 10 11"><path d="M1 10A9 9 0 0 1 9.5 1" fill="none" stroke="#444" stroke-width="1.1"/><path d="M3.2 10A6.4 6.4 0 0 1 9.5 3.6" fill="none" stroke="#444" stroke-width="1.1"/><path d="M5.4 10A4 4 0 0 1 9.5 6" fill="none" stroke="#444" stroke-width="1.1"/><circle cx="8.6" cy="9.4" r="1.2" fill="#222"/></svg><svg style="position:absolute;left:821px;top:677px;" width="13" height="13" viewBox="0 0 13 13"><path d="M0.8 4.5H3L6 1.5V11.5L3 8.5H0.8Z" fill="none" stroke="#222" stroke-width="1.1"/><path d="M8 4A3 3 0 0 1 8 9M9.8 2.5A5 5 0 0 1 9.8 10.5M11.6 1A7 7 0 0 1 11.6 12" fill="none" stroke="#222" stroke-width="1"/></svg><div style="position:absolute;left:840px;top:673px;font-family:'Liberation Sans',sans-serif;font-size:11px;line-height:11px;font-weight:400;color:#2a2a2a;white-space:nowrap;transform:scaleX(0.8);transform-origin:0 0;">POR</div><div style="position:absolute;left:840px;top:688.5px;font-family:'Liberation Sans',sans-serif;font-size:11px;line-height:11px;font-weight:400;color:#2a2a2a;white-space:nowrap;transform:scaleX(0.78);transform-origin:0 0;">PTB2</div><div style="position:absolute;left:876px;top:673px;font-family:'Liberation Sans',sans-serif;font-size:11px;line-height:11px;font-weight:400;color:#2a2a2a;white-space:nowrap;transform:scaleX(0.78);transform-origin:0 0;">16:30</div><div style="position:absolute;left:865px;top:688.5px;font-family:'Liberation Sans',sans-serif;font-size:11px;line-height:11px;font-weight:400;color:#2a2a2a;white-space:nowrap;transform:scaleX(0.72);transform-origin:0 0;">18/06/2021</div><svg style="position:absolute;left:917px;top:677px;" width="17" height="22" viewBox="0 0 17 22"><path d="M0.5 0.5H12V9.5H5L2 12.5V9.5H0.5Z" fill="#111"/><path d="M2.5 3H10M2.5 5H10M2.5 7H8" stroke="#d9e5f1" stroke-width="1"/><ellipse cx="11.5" cy="15.5" rx="5" ry="5.8" fill="#d2e4f1" stroke="#777" stroke-width="1"/><text x="11.5" y="19" text-anchor="middle" font-family="Liberation Sans" font-size="9" fill="#222">1</text></svg></div><div style="position:absolute;left:55px;top:97px;width:946px;height:705px;overflow:hidden"><div style="position:absolute;left:0px;top:0px;width:946px;height:32px;background:#dee1e6"></div><svg style="position:absolute;left:11.2px;top:11px;" width="12" height="11" viewBox="0 0 12 11"><path d="M1 10V2L6 6L11 2V10" fill="none" stroke="#c5221f" stroke-width="2.2"/><path d="M1 10V3" stroke="#4285f4" stroke-width="2.2"/><path d="M11 10V3" stroke="#34a853" stroke-width="2.2"/><path d="M6 6L11 2" stroke="#fbbc04" stroke-width="2"/></svg><div style="position:absolute;left:27.7px;top:11px;font-family:'Liberation Sans',sans-serif;font-size:11.5px;line-height:11.5px;font-weight:400;color:#55595d;white-space:nowrap;transform:scaleX(0.68);transform-origin:0 0;">C</div><div style="position:absolute;left:37.5px;top:7.5px;width:1px;height:18px;background:#a4a8ad"></div><svg style="position:absolute;left:42.5px;top:9.7px;" width="11" height="13" viewBox="0 0 11 13"><ellipse cx="5.5" cy="6.5" rx="5" ry="6.2" fill="#5f6368"/><path d="M5.6 1.2C3.6 1.6 2 3.4 2 5.6C3 6.4 4.4 6.6 4.6 8C4.8 9 4.2 10 4.6 11C6 10.2 6.4 9 5.6 7.8C5 6.8 3.6 6 4.6 4.6C5.4 3.8 6.4 3 5.6 1.2Z" fill="#f2f3f5"/><path d="M9.6 8C8.6 8.6 7.4 9.6 7.2 11.4C8.4 11 9.4 9.8 9.6 8Z" fill="#f2f3f5"/></svg><div style="position:absolute;left:59.5px;top:11px;font-family:'Liberation Sans',sans-serif;font-size:11.5px;line-height:11.5px;font-weight:400;color:#55595d;white-space:nowrap;transform:scaleX(0.68);transform-origin:0 0;">L</div><div style="position:absolute;left:69.3px;top:7.5px;width:1px;height:18px;background:#a4a8ad"></div><svg style="position:absolute;left:74.3px;top:9.7px;" width="11" height="13" viewBox="0 0 11 13"><ellipse cx="5.5" cy="6.5" rx="5" ry="6.2" fill="#5f6368"/><path d="M5.6 1.2C3.6 1.6 2 3.4 2 5.6C3 6.4 4.4 6.6 4.6 8C4.8 9 4.2 10 4.6 11C6 10.2 6.4 9 5.6 7.8C5 6.8 3.6 6 4.6 4.6C5.4 3.8 6.4 3 5.6 1.2Z" fill="#f2f3f5"/><path d="M9.6 8C8.6 8.6 7.4 9.6 7.2 11.4C8.4 11 9.4 9.8 9.6 8Z" fill="#f2f3f5"/></svg><div style="position:absolute;left:91.3px;top:11px;font-family:'Liberation Sans',sans-serif;font-size:11.5px;line-height:11.5px;font-weight:400;color:#55595d;white-space:nowrap;transform:scaleX(0.68);transform-origin:0 0;">C</div><div style="position:absolute;left:101.1px;top:7.5px;width:1px;height:18px;background:#a4a8ad"></div><svg style="position:absolute;left:106.1px;top:9.7px;" width="11" height="13" viewBox="0 0 11 13"><ellipse cx="5.5" cy="6.5" rx="5" ry="6.2" fill="#5f6368"/><path d="M5.6 1.2C3.6 1.6 2 3.4 2 5.6C3 6.4 4.4 6.6 4.6 8C4.8 9 4.2 10 4.6 11C6 10.2 6.4 9 5.6 7.8C5 6.8 3.6 6 4.6 4.6C5.4 3.8 6.4 3 5.6 1.2Z" fill="#f2f3f5"/><path d="M9.6 8C8.6 8.6 7.4 9.6 7.2 11.4C8.4 11 9.4 9.8 9.6 8Z" fill="#f2f3f5"/></svg><div style="position:absolute;left:123.1px;top:11px;font-family:'Liberation Sans',sans-serif;font-size:11.5px;line-height:11.5px;font-weight:400;color:#55595d;white-space:nowrap;transform:scaleX(0.68);transform-origin:0 0;">C</div><div style="position:absolute;left:132.9px;top:7.5px;width:1px;height:18px;background:#a4a8ad"></div><svg style="position:absolute;left:137.9px;top:9.7px;" width="11" height="13" viewBox="0 0 11 13"><ellipse cx="5.5" cy="6.5" rx="5" ry="6.2" fill="#5f6368"/><path d="M5.6 1.2C3.6 1.6 2 3.4 2 5.6C3 6.4 4.4 6.6 4.6 8C4.8 9 4.2 10 4.6 11C6 10.2 6.4 9 5.6 7.8C5 6.8 3.6 6 4.6 4.6C5.4 3.8 6.4 3 5.6 1.2Z" fill="#f2f3f5"/><path d="M9.6 8C8.6 8.6 7.4 9.6 7.2 11.4C8.4 11 9.4 9.8 9.6 8Z" fill="#f2f3f5"/></svg><div style="position:absolute;left:154.9px;top:11px;font-family:'Liberation Sans',sans-serif;font-size:11.5px;line-height:11.5px;font-weight:400;color:#55595d;white-space:nowrap;transform:scaleX(0.68);transform-origin:0 0;">C</div><div style="position:absolute;left:164.7px;top:7.5px;width:1px;height:18px;background:#a4a8ad"></div><svg style="position:absolute;left:169.7px;top:9.7px;" width="11" height="13" viewBox="0 0 11 13"><ellipse cx="5.5" cy="6.5" rx="5" ry="6.2" fill="#5f6368"/><path d="M5.6 1.2C3.6 1.6 2 3.4 2 5.6C3 6.4 4.4 6.6 4.6 8C4.8 9 4.2 10 4.6 11C6 10.2 6.4 9 5.6 7.8C5 6.8 3.6 6 4.6 4.6C5.4 3.8 6.4 3 5.6 1.2Z" fill="#f2f3f5"/><path d="M9.6 8C8.6 8.6 7.4 9.6 7.2 11.4C8.4 11 9.4 9.8 9.6 8Z" fill="#f2f3f5"/></svg><div style="position:absolute;left:186.7px;top:11px;font-family:'Liberation Sans',sans-serif;font-size:11.5px;line-height:11.5px;font-weight:400;color:#55595d;white-space:nowrap;transform:scaleX(0.68);transform-origin:0 0;">C</div><div style="position:absolute;left:196.5px;top:7.5px;width:1px;height:18px;background:#a4a8ad"></div><svg style="position:absolute;left:201.5px;top:9.7px;" width="11" height="13" viewBox="0 0 11 13"><ellipse cx="5.5" cy="6.5" rx="5" ry="6.2" fill="#5f6368"/><path d="M5.6 1.2C3.6 1.6 2 3.4 2 5.6C3 6.4 4.4 6.6 4.6 8C4.8 9 4.2 10 4.6 11C6 10.2 6.4 9 5.6 7.8C5 6.8 3.6 6 4.6 4.6C5.4 3.8 6.4 3 5.6 1.2Z" fill="#f2f3f5"/><path d="M9.6 8C8.6 8.6 7.4 9.6 7.2 11.4C8.4 11 9.4 9.8 9.6 8Z" fill="#f2f3f5"/></svg><div style="position:absolute;left:218.5px;top:11px;font-family:'Liberation Sans',sans-serif;font-size:11.5px;line-height:11.5px;font-weight:400;color:#55595d;white-space:nowrap;transform:scaleX(0.68);transform-origin:0 0;">C</div><div style="position:absolute;left:228.3px;top:7.5px;width:1px;height:18px;background:#a4a8ad"></div><svg style="position:absolute;left:233.3px;top:9.7px;" width="11" height="13" viewBox="0 0 11 13"><ellipse cx="5.5" cy="6.5" rx="5" ry="6.2" fill="#5f6368"/><path d="M5.6 1.2C3.6 1.6 2 3.4 2 5.6C3 6.4 4.4 6.6 4.6 8C4.8 9 4.2 10 4.6 11C6 10.2 6.4 9 5.6 7.8C5 6.8 3.6 6 4.6 4.6C5.4 3.8 6.4 3 5.6 1.2Z" fill="#f2f3f5"/><path d="M9.6 8C8.6 8.6 7.4 9.6 7.2 11.4C8.4 11 9.4 9.8 9.6 8Z" fill="#f2f3f5"/></svg><div style="position:absolute;left:250.3px;top:11px;font-family:'Liberation Sans',sans-serif;font-size:11.5px;line-height:11.5px;font-weight:400;color:#55595d;white-space:nowrap;transform:scaleX(0.68);transform-origin:0 0;">C</div><div style="position:absolute;left:260.1px;top:7.5px;width:1px;height:18px;background:#a4a8ad"></div><svg style="position:absolute;left:265.1px;top:8.5px;" width="13" height="16" viewBox="0 0 13 16"><ellipse cx="6" cy="8.5" rx="5.6" ry="7.2" fill="#2c6ca6"/><path d="M3.6 5L5.6 9.5L8.6 10.2L6.4 12.4Z" fill="#a6daf6"/><circle cx="9.6" cy="3.2" r="2.2" fill="#e8c050"/></svg><div style="position:absolute;left:282.1px;top:11px;font-family:'Liberation Sans',sans-serif;font-size:11.5px;line-height:11.5px;font-weight:400;color:#55595d;white-space:nowrap;transform:scaleX(0.68);transform-origin:0 0;">(</div><div style="position:absolute;left:291.9px;top:7.5px;width:1px;height:18px;background:#a4a8ad"></div><svg style="position:absolute;left:296.9px;top:9.7px;" width="11" height="13" viewBox="0 0 11 13"><ellipse cx="5.5" cy="6.5" rx="5" ry="6.2" fill="#5f6368"/><path d="M5.6 1.2C3.6 1.6 2 3.4 2 5.6C3 6.4 4.4 6.6 4.6 8C4.8 9 4.2 10 4.6 11C6 10.2 6.4 9 5.6 7.8C5 6.8 3.6 6 4.6 4.6C5.4 3.8 6.4 3 5.6 1.2Z" fill="#f2f3f5"/><path d="M9.6 8C8.6 8.6 7.4 9.6 7.2 11.4C8.4 11 9.4 9.8 9.6 8Z" fill="#f2f3f5"/></svg><div style="position:absolute;left:313.9px;top:11px;font-family:'Liberation Sans',sans-serif;font-size:11.5px;line-height:11.5px;font-weight:400;color:#55595d;white-space:nowrap;transform:scaleX(0.68);transform-origin:0 0;">A</div><div style="position:absolute;left:323.7px;top:7.5px;width:1px;height:18px;background:#a4a8ad"></div><svg style="position:absolute;left:328.7px;top:9.7px;" width="11" height="13" viewBox="0 0 11 13"><ellipse cx="5.5" cy="6.5" rx="5" ry="6.2" fill="#5f6368"/><path d="M5.6 1.2C3.6 1.6 2 3.4 2 5.6C3 6.4 4.4 6.6 4.6 8C4.8 9 4.2 10 4.6 11C6 10.2 6.4 9 5.6 7.8C5 6.8 3.6 6 4.6 4.6C5.4 3.8 6.4 3 5.6 1.2Z" fill="#f2f3f5"/><path d="M9.6 8C8.6 8.6 7.4 9.6 7.2 11.4C8.4 11 9.4 9.8 9.6 8Z" fill="#f2f3f5"/></svg><div style="position:absolute;left:345.7px;top:11px;font-family:'Liberation Sans',sans-serif;font-size:11.5px;line-height:11.5px;font-weight:400;color:#55595d;white-space:nowrap;transform:scaleX(0.68);transform-origin:0 0;">L</div><div style="position:absolute;left:355.5px;top:7.5px;width:1px;height:18px;background:#a4a8ad"></div><svg style="position:absolute;left:360.5px;top:9.7px;" width="11" height="13" viewBox="0 0 11 13"><ellipse cx="5.5" cy="6.5" rx="5" ry="6.2" fill="#5f6368"/><path d="M5.6 1.2C3.6 1.6 2 3.4 2 5.6C3 6.4 4.4 6.6 4.6 8C4.8 9 4.2 10 4.6 11C6 10.2 6.4 9 5.6 7.8C5 6.8 3.6 6 4.6 4.6C5.4 3.8 6.4 3 5.6 1.2Z" fill="#f2f3f5"/><path d="M9.6 8C8.6 8.6 7.4 9.6 7.2 11.4C8.4 11 9.4 9.8 9.6 8Z" fill="#f2f3f5"/></svg><div style="position:absolute;left:377.5px;top:11px;font-family:'Liberation Sans',sans-serif;font-size:11.5px;line-height:11.5px;font-weight:400;color:#55595d;white-space:nowrap;transform:scaleX(0.68);transform-origin:0 0;">L</div><div style="position:absolute;left:387.3px;top:7.5px;width:1px;height:18px;background:#a4a8ad"></div><svg style="position:absolute;left:392.8px;top:12px;" width="12" height="10" viewBox="0 0 12 10"><rect x="0.3" y="0.5" width="11.4" height="9" rx="2.2" fill="#e62117"/><path d="M4.6 2.8L8.2 5L4.6 7.2Z" fill="#fff"/></svg><div style="position:absolute;left:409.3px;top:11px;font-family:'Liberation Sans',sans-serif;font-size:11.5px;line-height:11.5px;font-weight:400;color:#55595d;white-space:nowrap;transform:scaleX(0.68);transform-origin:0 0;">(</div><div style="position:absolute;left:419.1px;top:7.5px;width:1px;height:18px;background:#a4a8ad"></div><svg style="position:absolute;left:424.6px;top:12px;" width="12" height="10" viewBox="0 0 12 10"><rect x="0.3" y="0.5" width="11.4" height="9" rx="2.2" fill="#e62117"/><path d="M4.6 2.8L8.2 5L4.6 7.2Z" fill="#fff"/></svg><div style="position:absolute;left:441.1px;top:11px;font-family:'Liberation Sans',sans-serif;font-size:11.5px;line-height:11.5px;font-weight:400;color:#55595d;white-space:nowrap;transform:scaleX(0.68);transform-origin:0 0;">(</div><div style="position:absolute;left:450.9px;top:7.5px;width:1px;height:18px;background:#a4a8ad"></div><svg style="position:absolute;left:458.4px;top:10px;" width="9" height="13" viewBox="0 0 9 13"><path d="M4.5 12.6C2.5 9.8 0.4 7.4 0.4 4.6A4.1 4.1 0 0 1 8.6 4.6C8.6 7.4 6.5 9.8 4.5 12.6Z" fill="#34a853"/><path d="M0.4 4.6A4.1 4.1 0 0 1 4.5 0.5L4.5 6Z" fill="#4285f4"/><path d="M4.5 0.5A4.1 4.1 0 0 1 8.6 4.6L4.5 6Z" fill="#ea4335"/><path d="M1.2 7.3L4.5 6L3.3 9.8Z" fill="#fbbc04"/><circle cx="4.5" cy="4.6" r="1.5" fill="#fff"/></svg><div style="position:absolute;left:472.9px;top:11px;font-family:'Liberation Sans',sans-serif;font-size:11.5px;line-height:11.5px;font-weight:400;color:#55595d;white-space:nowrap;transform:scaleX(0.68);transform-origin:0 0;">2</div><div style="position:absolute;left:482.7px;top:7.5px;width:1px;height:18px;background:#a4a8ad"></div><svg style="position:absolute;left:488.2px;top:9px;" width="12" height="15" viewBox="0 0 12 15"><g fill="#2f9e44"><ellipse cx="3.4" cy="4.2" rx="3.2" ry="3.8"/><ellipse cx="8.6" cy="4.2" rx="3.2" ry="3.8"/><ellipse cx="3.4" cy="10.4" rx="3.2" ry="3.8"/><ellipse cx="8.6" cy="10.4" rx="3.2" ry="3.8"/><rect x="2" y="4" width="8" height="7"/></g><path d="M6 2.5V12.5M1.8 7.3H10.2" stroke="#cfe8d2" stroke-width="0.7"/></svg><div style="position:absolute;left:504.7px;top:11px;font-family:'Liberation Sans',sans-serif;font-size:11.5px;line-height:11.5px;font-weight:400;color:#55595d;white-space:nowrap;transform:scaleX(0.68);transform-origin:0 0;">R</div><div style="position:absolute;left:514.5px;top:7.5px;width:1px;height:18px;background:#a4a8ad"></div><svg style="position:absolute;left:520.0px;top:9px;" width="12" height="15" viewBox="0 0 12 15"><g fill="#2f9e44"><ellipse cx="3.4" cy="4.2" rx="3.2" ry="3.8"/><ellipse cx="8.6" cy="4.2" rx="3.2" ry="3.8"/><ellipse cx="3.4" cy="10.4" rx="3.2" ry="3.8"/><ellipse cx="8.6" cy="10.4" rx="3.2" ry="3.8"/><rect x="2" y="4" width="8" height="7"/></g><path d="M6 2.5V12.5M1.8 7.3H10.2" stroke="#cfe8d2" stroke-width="0.7"/></svg><div style="position:absolute;left:536.5px;top:11px;font-family:'Liberation Sans',sans-serif;font-size:11.5px;line-height:11.5px;font-weight:400;color:#55595d;white-space:nowrap;transform:scaleX(0.68);transform-origin:0 0;">P</div><div style="position:absolute;left:546.3px;top:7.5px;width:1px;height:18px;background:#a4a8ad"></div><svg style="position:absolute;left:551.8px;top:9px;" width="12" height="15" viewBox="0 0 12 15"><g fill="#2f9e44"><ellipse cx="3.4" cy="4.2" rx="3.2" ry="3.8"/><ellipse cx="8.6" cy="4.2" rx="3.2" ry="3.8"/><ellipse cx="3.4" cy="10.4" rx="3.2" ry="3.8"/><ellipse cx="8.6" cy="10.4" rx="3.2" ry="3.8"/><rect x="2" y="4" width="8" height="7"/></g><path d="M6 2.5V12.5M1.8 7.3H10.2" stroke="#cfe8d2" stroke-width="0.7"/></svg><div style="position:absolute;left:568.3px;top:11px;font-family:'Liberation Sans',sans-serif;font-size:11.5px;line-height:11.5px;font-weight:400;color:#55595d;white-space:nowrap;transform:scaleX(0.68);transform-origin:0 0;">G</div><div style="position:absolute;left:578.1px;top:7.5px;width:1px;height:18px;background:#a4a8ad"></div><svg style="position:absolute;left:583.6px;top:11px;" width="11" height="12" viewBox="0 0 11 12"><ellipse cx="5.5" cy="6" rx="4.7" ry="5.1" fill="#d6efe8" stroke="#5a6a68" stroke-width="1.2"/><ellipse cx="5.7" cy="6" rx="3" ry="3.3" fill="#2aa085"/></svg><div style="position:absolute;left:600.1px;top:11px;font-family:'Liberation Sans',sans-serif;font-size:11.5px;line-height:11.5px;font-weight:400;color:#55595d;white-space:nowrap;transform:scaleX(0.68);transform-origin:0 0;">F</div><div style="position:absolute;left:609.9px;top:7.5px;width:1px;height:18px;background:#a4a8ad"></div><svg style="position:absolute;left:615.4px;top:11px;" width="11" height="12" viewBox="0 0 11 12"><rect x="0" y="0" width="11" height="12" fill="#fbfbfb"/><ellipse cx="5.5" cy="6" rx="2.6" ry="2.8" fill="#3aa98f"/></svg><div style="position:absolute;left:631.9px;top:11px;font-family:'Liberation Sans',sans-serif;font-size:11.5px;line-height:11.5px;font-weight:400;color:#55595d;white-space:nowrap;transform:scaleX(0.68);transform-origin:0 0;">F</div><div style="position:absolute;left:641.7px;top:7.5px;width:1px;height:18px;background:#a4a8ad"></div><svg style="position:absolute;left:647.2px;top:11px;" width="11" height="12" viewBox="0 0 11 12"><ellipse cx="5.5" cy="6" rx="4.7" ry="5.1" fill="#d6efe8" stroke="#5a6a68" stroke-width="1.2"/><ellipse cx="5.7" cy="6" rx="3" ry="3.3" fill="#2aa085"/></svg><div style="position:absolute;left:663.7px;top:11px;font-family:'Liberation Sans',sans-serif;font-size:11.5px;line-height:11.5px;font-weight:400;color:#55595d;white-space:nowrap;transform:scaleX(0.68);transform-origin:0 0;">L</div><div style="position:absolute;left:673.5px;top:2px;width:32.2px;height:30px;background:#fff;border-radius:7px 7px 0 0"></div><div style="position:absolute;left:679.0px;top:10px;font-family:'Liberation Sans',sans-serif;font-size:12px;line-height:12px;font-weight:400;color:#777;white-space:nowrap;transform:scaleX(0.78);transform-origin:0 0;">(6</div><svg style="position:absolute;left:692.0px;top:12.5px;" width="7" height="7" viewBox="0 0 7 7"><path d="M0.8 0.8L6.2 6.2M6.2 0.8L0.8 6.2" stroke="#3c4043" stroke-width="1.4"/></svg><svg style="position:absolute;left:710.3px;top:9.7px;" width="11" height="13" viewBox="0 0 11 13"><ellipse cx="5.5" cy="6.5" rx="5" ry="6.2" fill="#5f6368"/><path d="M5.6 1.2C3.6 1.6 2 3.4 2 5.6C3 6.4 4.4 6.6 4.6 8C4.8 9 4.2 10 4.6 11C6 10.2 6.4 9 5.6 7.8C5 6.8 3.6 6 4.6 4.6C5.4 3.8 6.4 3 5.6 1.2Z" fill="#f2f3f5"/><path d="M9.6 8C8.6 8.6 7.4 9.6 7.2 11.4C8.4 11 9.4 9.8 9.6 8Z" fill="#f2f3f5"/></svg><div style="position:absolute;left:727.3px;top:11px;font-family:'Liberation Sans',sans-serif;font-size:11.5px;line-height:11.5px;font-weight:400;color:#55595d;white-space:nowrap;transform:scaleX(0.68);transform-origin:0 0;">C</div><div style="position:absolute;left:737.1px;top:7.5px;width:1px;height:18px;background:#a4a8ad"></div><svg style="position:absolute;left:742.6px;top:11px;" width="11" height="13" viewBox="0 0 11 13"><ellipse cx="5.5" cy="6.5" rx="5.2" ry="6.2" fill="#3dbb4a"/><path d="M4.4 4.2L6.2 3.2V10" fill="none" stroke="#e6f7e7" stroke-width="1.5"/></svg><div style="position:absolute;left:759.1px;top:11px;font-family:'Liberation Sans',sans-serif;font-size:11.5px;line-height:11.5px;font-weight:400;color:#55595d;white-space:nowrap;transform:scaleX(0.68);transform-origin:0 0;">(</div><div style="position:absolute;left:768.9px;top:7.5px;width:1px;height:18px;background:#a4a8ad"></div><svg style="position:absolute;left:777px;top:11px;" width="11" height="11" viewBox="0 0 11 11"><path d="M5.5 0.5V10.5M0.5 5.5H10.5" stroke="#3c4043" stroke-width="1.7"/></svg><svg style="position:absolute;left:830px;top:9px;" width="12" height="14" viewBox="0 0 12 14"><ellipse cx="6" cy="7" rx="5.6" ry="6.5" fill="#3c4043"/><path d="M3.6 5.6H8.4L6 8.8Z" fill="#fff"/></svg><div style="position:absolute;left:862px;top:14px;width:9px;height:1.3px;background:#3c4043"></div><svg style="position:absolute;left:894px;top:8px;" width="10" height="11" viewBox="0 0 10 11"><rect x="0.8" y="2.8" width="6.4" height="7.4" fill="none" stroke="#3c4043" stroke-width="1.3" rx="1"/><path d="M2.8 0.8H8.4Q9.2 0.8 9.2 1.6V8" fill="none" stroke="#3c4043" stroke-width="1.2"/></svg><svg style="position:absolute;left:925px;top:8px;" width="10" height="11" viewBox="0 0 10 11"><path d="M0.7 0.7L9.3 10.3M9.3 0.7L0.7 10.3" stroke="#3c4043" stroke-width="1.3"/></svg><div style="position:absolute;left:0px;top:32px;width:946px;height:34px;background:#fff"></div><svg style="position:absolute;left:10px;top:42px;" width="12" height="13" viewBox="0 0 12 13"><path d="M11.5 6.5H1.5M6.5 1L1.2 6.5L6.5 12" fill="none" stroke="#5f6368" stroke-width="1.6"/></svg><svg style="position:absolute;left:32px;top:42px;" width="12" height="13" viewBox="0 0 12 13"><path d="M0.5 6.5H10.5M5.5 1L10.8 6.5L5.5 12" fill="none" stroke="#b4b7bb" stroke-width="1.5"/></svg><svg style="position:absolute;left:54px;top:42px;" width="12" height="14" viewBox="0 0 12 14"><path d="M10 4.2A4.9 5.6 0 1 0 10.6 8.5" fill="none" stroke="#5f6368" stroke-width="1.7"/><path d="M11.4 0.6V5.6H6.6Z" fill="#5f6368"/></svg><div style="position:absolute;left:77px;top:36px;width:792px;height:24px;background:#f1f3f4;border-radius:12px"></div><svg style="position:absolute;left:84px;top:43px;" width="7" height="10" viewBox="0 0 7 10"><path d="M1.6 4.5V3A1.9 2.2 0 0 1 5.4 3V4.5" fill="none" stroke="#5f6368" stroke-width="1.2"/><rect x="0.3" y="4.3" width="6.4" height="5.5" rx="0.8" fill="#5f6368"/></svg><div style="position:absolute;left:98px;top:42px;font-family:'Liberation Sans',sans-serif;font-size:13px;line-height:13px;font-weight:400;color:#3c3c3c;white-space:nowrap;transform:scaleX(0.77);transform-origin:0 0;"><span style="color:#3c3c3c">novoimobex.com.br</span><span style="color:#7a7e82">/#fotos-imovel</span></div><svg style="position:absolute;left:832px;top:43px;" width="11" height="12" viewBox="0 0 11 12"><ellipse cx="4.6" cy="4.8" rx="3.8" ry="4.1" fill="none" stroke="#5f6368" stroke-width="1.4"/><path d="M7.3 7.8L10.4 11.4" stroke="#5f6368" stroke-width="1.6"/><path d="M4.6 3V6.6M2.8 4.8H6.4" stroke="#5f6368" stroke-width="1.1"/></svg><svg style="position:absolute;left:854px;top:43px;" width="11" height="12" viewBox="0 0 11 12"><path d="M5.5 0.8L6.9 4.4L10.5 4.6L7.7 7L8.7 11L5.5 8.8L2.3 11L3.3 7L0.5 4.6L4.1 4.4Z" fill="none" stroke="#5f6368" stroke-width="1.3" stroke-linejoin="round"/></svg><svg style="position:absolute;left:881px;top:42px;" width="12" height="13" viewBox="0 0 12 13"><path d="M1 4H3.2A1.8 1.8 0 0 1 6.8 4H9.5V6.6A1.8 1.8 0 0 1 9.5 10.2V12.5H6.6A1.8 1.8 0 0 0 3.2 12.5H1V9.6A1.8 1.8 0 0 0 1 6.4Z" fill="#5f6368"/></svg><svg style="position:absolute;left:900px;top:38px;" width="17" height="20" viewBox="0 0 17 20"><ellipse cx="8.5" cy="10" rx="8" ry="9.6" fill="#5c6bc0"/><text x="8.5" y="13.6" text-anchor="middle" font-family="Liberation Sans" font-size="11" fill="#e8eaf6">m</text></svg><svg style="position:absolute;left:929px;top:42px;" width="5" height="14" viewBox="0 0 5 14"><circle cx="2.5" cy="2" r="1.4" fill="#5f6368"/><circle cx="2.5" cy="7" r="1.4" fill="#5f6368"/><circle cx="2.5" cy="12" r="1.4" fill="#5f6368"/></svg><div style="position:absolute;left:0px;top:66px;width:946px;height:639px;background:#080909"></div><div style="position:absolute;left:0px;top:66px;width:1px;height:551px;background:#2a2a2a"></div><svg style="position:absolute;left:334px;top:66px" width="278" height="550" viewBox="0 0 278 550"><defs><filter id="bl" x="-2%" y="-2%" width="104%" height="104%"><feGaussianBlur stdDeviation="0.8"/></filter><filter id="bl2" x="-100%" y="-100%" width="300%" height="300%"><feGaussianBlur stdDeviation="2"/></filter><filter id="bl4" x="-100%" y="-100%" width="300%" height="300%"><feGaussianBlur stdDeviation="4"/></filter><filter id="bl8" x="-150%" y="-150%" width="400%" height="400%"><feGaussianBlur stdDeviation="8"/></filter><filter id="bl16" x="-150%" y="-150%" width="400%" height="400%"><feGaussianBlur stdDeviation="16"/></filter><linearGradient id="door" x1="0" y1="0" x2="0" y2="1"><stop offset="0" stop-color="#c0562c"/><stop offset="0.42" stop-color="#b24e28"/><stop offset="0.7" stop-color="#9c4424"/><stop offset="1" stop-color="#7c3020"/></linearGradient><linearGradient id="doorr" x1="0" y1="0" x2="0" y2="1"><stop offset="0" stop-color="#92402a"/><stop offset="1" stop-color="#5e2618"/></linearGradient><linearGradient id="gran" x1="0" y1="0" x2="0" y2="1"><stop offset="0" stop-color="#b49468"/><stop offset="0.45" stop-color="#c6a474"/><stop offset="1" stop-color="#c09e6e"/></linearGradient><linearGradient id="cab" x1="0" y1="0" x2="0" y2="1"><stop offset="0" stop-color="#111838"/><stop offset="1" stop-color="#0b1028"/></linearGradient><radialGradient id="glow" cx="0.5" cy="0.5" r="0.5"><stop offset="0" stop-color="#fffbe0"/><stop offset="0.3" stop-color="#f6d47a" stop-opacity="0.95"/><stop offset="1" stop-color="#7a5020" stop-opacity="0"/></radialGradient><radialGradient id="glow2" cx="0.5" cy="0.5" r="0.5"><stop offset="0" stop-color="#d89a52"/><stop offset="0.5" stop-color="#8a5a30" stop-opacity="0.7"/><stop offset="1" stop-color="#3a2a20" stop-opacity="0"/></radialGradient><radialGradient id="spot" cx="0.5" cy="0.5" r="0.5"><stop offset="0" stop-color="#ffffff"/><stop offset="0.45" stop-color="#e8f0ff" stop-opacity="0.85"/><stop offset="1" stop-color="#8090b0" stop-opacity="0"/></radialGradient><radialGradient id="sink" cx="0.6" cy="0.4" r="0.65"><stop offset="0" stop-color="#28345c"/><stop offset="1" stop-color="#0e1428"/></radialGradient></defs><g filter="url(#bl)" transform="translate(-389,-163)"><rect x="385" y="160" width="290" height="560" fill="#101016"/><rect x="398" y="160" width="222" height="103" fill="#161a28"/><ellipse cx="415" cy="200" rx="20" ry="30" fill="#22263a" filter="url(#bl8)"/><ellipse cx="470" cy="215" rx="26" ry="26" fill="#3a3230" filter="url(#bl8)"/><ellipse cx="450" cy="250" rx="20" ry="10" fill="#1e2232" filter="url(#bl8)"/><ellipse cx="410" cy="240" rx="15" ry="12" fill="#20243a" filter="url(#bl8)"/><ellipse cx="510" cy="230" rx="15" ry="15" fill="#262a3a" filter="url(#bl8)"/><ellipse cx="468" cy="205" rx="34" ry="32" fill="#8a7458" opacity="0.5" filter="url(#bl16)"/><ellipse cx="468" cy="200" rx="22" ry="22" fill="#d8b878" opacity="0.6" filter="url(#bl8)"/><defs><linearGradient id="rdk" x1="0" y1="0" x2="1" y2="0"><stop offset="0" stop-color="#0c0a0c" stop-opacity="0"/><stop offset="0.2" stop-color="#0c0a0c"/><stop offset="1" stop-color="#0c0a0c"/></linearGradient></defs><rect x="520" y="160" width="103" height="103" fill="url(#rdk)"/><path d="M437 163V245 M487 163V253 M531 163V258" stroke="#cdb88a" stroke-width="1.4" fill="none"/><path d="M565 163V262 M569 163V262 M600 163V258" stroke="#a89888" stroke-width="1.1" fill="none" opacity="0.85"/><path d="M531 163L566 171L600 163" stroke="#a89888" stroke-width="1" fill="none" opacity="0.7"/><path d="M389 244L531 256L569 262L617 250" stroke="#b4a482" stroke-width="1.3" fill="none"/><path d="M389 261L569 270L617 262" stroke="#d2c2a0" stroke-width="1.4" fill="none"/><path d="M455 163H500L505 176Q505 190 495 189L465 183Q456 180 455 172Z" fill="#5a2c10"/><path d="M458 163H498L502 171L462 167Z" fill="#a8642c" opacity="0.7"/><ellipse cx="466" cy="196" rx="17" ry="15" fill="url(#glow)"/><ellipse cx="466" cy="194" rx="7" ry="6" fill="#fffce8"/><ellipse cx="583" cy="201" rx="16" ry="15" fill="url(#glow2)"/><ellipse cx="584" cy="202" rx="6" ry="7" fill="#e8a848" opacity="0.8" filter="url(#bl2)"/><ellipse cx="561" cy="203" rx="6" ry="9" fill="#8a5a30" opacity="0.6" filter="url(#bl4)"/><ellipse cx="612" cy="225" rx="5" ry="7" fill="#f0c048" opacity="0.95" filter="url(#bl2)"/><polygon points="389,262 464,265 464,500 389,500" fill="#0d0d13"/><path d="M410 300V460 M440 300V460 M395 330H462 M395 390H462 M395 440H462" stroke="#15151b" stroke-width="1.3" fill="none"/><path d="M390 262L406 470" stroke="#6a6a72" stroke-width="1.6" fill="none" opacity="0.8"/><polygon points="464,254 489,256 489,452 464,452" fill="url(#doorr)"/><rect x="488" y="262" width="9" height="190" fill="#dcded6"/><rect x="497" y="262" width="14" height="190" fill="#a4ae9e"/><circle cx="491" cy="405" r="2.6" fill="#1a1210"/><circle cx="477" cy="405" r="1.5" fill="#d0a080"/><polygon points="511,262 617,262 617,480 511,460" fill="#0c0e18"/><path d="M511 340L611 354 M511 408L611 447" stroke="#a8a090" stroke-width="1.1" fill="none"/><path d="M534 262V455 M557 262V475 M565 262V475 M598 262V478" stroke="#a8a090" stroke-width="1.1" fill="none" opacity="0.85"/><ellipse cx="531" cy="290" rx="7.5" ry="18.5" fill="none" stroke="#c8b080" stroke-width="1.2"/><ellipse cx="597" cy="287" rx="11.5" ry="21" fill="none" stroke="#d0b480" stroke-width="1.3"/><circle cx="531" cy="271" r="2.5" fill="#d8b870"/><circle cx="597" cy="266" r="3" fill="#d8b870"/><ellipse cx="556" cy="311" rx="12" ry="9" fill="url(#spot)"/><ellipse cx="586" cy="312" rx="13" ry="10" fill="url(#spot)"/><rect x="525" y="356" width="8" height="25" fill="#a8a8a0"/><rect x="593" y="372" width="12" height="30" fill="#aaaaa2"/><polygon points="389,472 527,442 560,448 560,465 389,500" fill="#a88858"/><ellipse cx="425" cy="484" rx="36" ry="12" transform="rotate(-8 425 484)" fill="#141c34"/><rect x="428" y="472" width="8" height="14" fill="#b8b098"/><rect x="495" y="426" width="27" height="32" rx="4" fill="#d0b890" opacity="0.8"/><polygon points="543,463 604,440 604,478 543,478" fill="#0c0e18"/><polygon points="389,500 543,463 604,474 600,537 389,614" fill="url(#gran)"/><path d="M389 500L543 463" stroke="#e8dcc0" stroke-width="1.2" opacity="0.7" fill="none"/><polygon points="389,500 543,463 604,474 604,482 389,524" fill="#a88a60" opacity="0.6"/><circle cx="529.0" cy="471.2" r="0.8" fill="#f4e8d0" opacity="0.7"/><circle cx="401.5" cy="538.7" r="0.6" fill="#4a3018" opacity="0.7"/><circle cx="478.9" cy="497.3" r="0.6" fill="#2a2018" opacity="0.7"/><circle cx="524.6" cy="550.4" r="1.0" fill="#4a3018" opacity="0.7"/><circle cx="399.0" cy="593.1" r="0.9" fill="#3a2814" opacity="0.7"/><circle cx="505.2" cy="548.5" r="0.6" fill="#6a4828" opacity="0.7"/><circle cx="511.8" cy="489.1" r="1.0" fill="#f4e8d0" opacity="0.7"/><circle cx="433.3" cy="565.5" r="1.2" fill="#2a2018" opacity="0.7"/><circle cx="466.7" cy="498.5" r="1.1" fill="#6a4828" opacity="0.7"/><circle cx="441.5" cy="549.0" r="1.3" fill="#ffffff" opacity="0.7"/><circle cx="545.8" cy="504.6" r="0.6" fill="#f4e8d0" opacity="0.7"/><circle cx="478.9" cy="577.4" r="1.3" fill="#6a4828" opacity="0.7"/><circle cx="405.7" cy="546.5" r="0.8" fill="#8a6038" opacity="0.7"/><circle cx="464.3" cy="537.0" r="0.6" fill="#ffffff" opacity="0.7"/><circle cx="409.1" cy="501.8" r="0.6" fill="#f4e8d0" opacity="0.7"/><circle cx="450.2" cy="519.8" r="0.5" fill="#8a6038" opacity="0.7"/><circle cx="488.3" cy="486.0" r="0.9" fill="#f4e8d0" opacity="0.7"/><circle cx="435.9" cy="504.6" r="0.9" fill="#ece0c4" opacity="0.7"/><circle cx="586.1" cy="537.0" r="0.9" fill="#6a4828" opacity="0.7"/><circle cx="448.9" cy="524.4" r="1.1" fill="#8a6038" opacity="0.7"/><circle cx="470.8" cy="495.8" r="0.7" fill="#f4e8d0" opacity="0.7"/><circle cx="438.9" cy="496.2" r="1.2" fill="#ffffff" opacity="0.7"/><circle cx="428.2" cy="503.7" r="0.9" fill="#6a4828" opacity="0.7"/><circle cx="468.4" cy="547.8" r="1.1" fill="#6a4828" opacity="0.7"/><circle cx="499.8" cy="555.7" r="0.9" fill="#4a3018" opacity="0.7"/><circle cx="535.3" cy="546.7" r="0.9" fill="#2a2018" opacity="0.7"/><circle cx="411.3" cy="558.3" r="0.7" fill="#4a3018" opacity="0.7"/><circle cx="600.7" cy="528.3" r="0.8" fill="#f4e8d0" opacity="0.7"/><circle cx="420.9" cy="499.1" r="1.0" fill="#8a6038" opacity="0.7"/><circle cx="490.9" cy="477.9" r="1.4" fill="#ffffff" opacity="0.7"/><circle cx="489.2" cy="535.0" r="0.6" fill="#f4e8d0" opacity="0.7"/><circle cx="491.9" cy="567.3" r="0.7" fill="#4a3018" opacity="0.7"/><circle cx="593.7" cy="516.1" r="1.2" fill="#4a3018" opacity="0.7"/><circle cx="453.1" cy="559.7" r="1.1" fill="#f4e8d0" opacity="0.7"/><circle cx="445.1" cy="516.8" r="0.8" fill="#6a4828" opacity="0.7"/><circle cx="436.9" cy="543.9" r="1.1" fill="#8a6038" opacity="0.7"/><circle cx="552.0" cy="490.2" r="1.2" fill="#ece0c4" opacity="0.7"/><circle cx="548.1" cy="495.1" r="0.8" fill="#ffffff" opacity="0.7"/><circle cx="449.1" cy="500.2" r="0.9" fill="#8a6038" opacity="0.7"/><circle cx="594.3" cy="516.5" r="0.6" fill="#ece0c4" opacity="0.7"/><circle cx="490.1" cy="512.3" r="1.1" fill="#ffffff" opacity="0.7"/><circle cx="492.1" cy="561.2" r="1.3" fill="#f4e8d0" opacity="0.7"/><circle cx="414.8" cy="520.2" r="0.9" fill="#ece0c4" opacity="0.7"/><circle cx="427.4" cy="582.3" r="0.6" fill="#8a6038" opacity="0.7"/><circle cx="488.6" cy="575.2" r="1.2" fill="#f4e8d0" opacity="0.7"/><circle cx="421.5" cy="600.3" r="1.1" fill="#6a4828" opacity="0.7"/><circle cx="517.1" cy="533.5" r="0.6" fill="#8a6038" opacity="0.7"/><circle cx="411.1" cy="576.2" r="0.9" fill="#6a4828" opacity="0.7"/><circle cx="434.4" cy="499.0" r="1.0" fill="#3a2814" opacity="0.7"/><circle cx="553.2" cy="510.5" r="1.3" fill="#2a2018" opacity="0.7"/><circle cx="402.1" cy="574.7" r="1.1" fill="#ffffff" opacity="0.7"/><circle cx="564.2" cy="540.1" r="1.0" fill="#6a4828" opacity="0.7"/><circle cx="483.6" cy="488.4" r="1.2" fill="#4a3018" opacity="0.7"/><circle cx="522.1" cy="478.7" r="0.8" fill="#4a3018" opacity="0.7"/><circle cx="500.4" cy="546.1" r="1.3" fill="#f4e8d0" opacity="0.7"/><circle cx="519.3" cy="490.9" r="0.9" fill="#3a2814" opacity="0.7"/><circle cx="503.7" cy="534.1" r="1.1" fill="#ece0c4" opacity="0.7"/><circle cx="444.8" cy="546.7" r="1.3" fill="#ece0c4" opacity="0.7"/><circle cx="581.9" cy="483.9" r="0.6" fill="#8a6038" opacity="0.7"/><circle cx="474.6" cy="535.5" r="0.6" fill="#ece0c4" opacity="0.7"/><circle cx="481.8" cy="539.9" r="0.9" fill="#8a6038" opacity="0.7"/><circle cx="467.7" cy="512.4" r="0.9" fill="#ffffff" opacity="0.7"/><circle cx="392.9" cy="511.4" r="1.0" fill="#3a2814" opacity="0.7"/><circle cx="411.5" cy="501.2" r="1.3" fill="#4a3018" opacity="0.7"/><circle cx="428.0" cy="577.1" r="1.3" fill="#2a2018" opacity="0.7"/><circle cx="476.3" cy="543.2" r="1.1" fill="#ffffff" opacity="0.7"/><circle cx="537.0" cy="525.9" r="0.7" fill="#f4e8d0" opacity="0.7"/><circle cx="445.0" cy="554.3" r="0.6" fill="#ece0c4" opacity="0.7"/><circle cx="574.5" cy="530.3" r="1.4" fill="#8a6038" opacity="0.7"/><circle cx="597.4" cy="500.6" r="0.7" fill="#6a4828" opacity="0.7"/><circle cx="456.1" cy="507.3" r="0.8" fill="#ece0c4" opacity="0.7"/><circle cx="496.5" cy="487.6" r="1.2" fill="#8a6038" opacity="0.7"/><circle cx="393.0" cy="538.4" r="1.0" fill="#ece0c4" opacity="0.7"/><circle cx="441.8" cy="529.3" r="1.1" fill="#2a2018" opacity="0.7"/><circle cx="597.6" cy="507.7" r="1.4" fill="#ece0c4" opacity="0.7"/><circle cx="476.0" cy="513.9" r="1.3" fill="#4a3018" opacity="0.7"/><circle cx="392.1" cy="556.9" r="0.9" fill="#3a2814" opacity="0.7"/><circle cx="400.9" cy="563.1" r="1.3" fill="#2a2018" opacity="0.7"/><circle cx="533.2" cy="503.7" r="1.1" fill="#ece0c4" opacity="0.7"/><circle cx="467.3" cy="511.0" r="0.7" fill="#8a6038" opacity="0.7"/><circle cx="596.6" cy="508.0" r="0.7" fill="#8a6038" opacity="0.7"/><circle cx="449.0" cy="561.7" r="1.0" fill="#ece0c4" opacity="0.7"/><circle cx="390.1" cy="500.9" r="0.6" fill="#f4e8d0" opacity="0.7"/><circle cx="515.2" cy="521.1" r="0.8" fill="#3a2814" opacity="0.7"/><circle cx="439.1" cy="550.8" r="1.1" fill="#6a4828" opacity="0.7"/><circle cx="472.7" cy="510.6" r="0.6" fill="#ffffff" opacity="0.7"/><circle cx="398.4" cy="589.5" r="1.2" fill="#2a2018" opacity="0.7"/><circle cx="563.6" cy="481.6" r="1.2" fill="#4a3018" opacity="0.7"/><circle cx="417.6" cy="515.9" r="0.8" fill="#f4e8d0" opacity="0.7"/><circle cx="393.1" cy="542.4" r="0.9" fill="#ece0c4" opacity="0.7"/><circle cx="389.7" cy="583.6" r="1.1" fill="#f4e8d0" opacity="0.7"/><circle cx="403.2" cy="574.2" r="1.2" fill="#3a2814" opacity="0.7"/><circle cx="570.9" cy="496.4" r="0.7" fill="#ece0c4" opacity="0.7"/><circle cx="528.7" cy="531.4" r="0.6" fill="#2a2018" opacity="0.7"/><circle cx="584.8" cy="504.5" r="1.1" fill="#4a3018" opacity="0.7"/><circle cx="527.2" cy="472.0" r="0.8" fill="#6a4828" opacity="0.7"/><circle cx="522.5" cy="480.7" r="0.6" fill="#ffffff" opacity="0.7"/><circle cx="446.8" cy="564.2" r="1.1" fill="#ece0c4" opacity="0.7"/><circle cx="451.5" cy="540.1" r="0.9" fill="#ffffff" opacity="0.7"/><circle cx="507.1" cy="508.3" r="1.3" fill="#f4e8d0" opacity="0.7"/><circle cx="392.8" cy="531.1" r="1.4" fill="#ffffff" opacity="0.7"/><circle cx="408.4" cy="575.9" r="1.4" fill="#3a2814" opacity="0.7"/><circle cx="417.5" cy="587.1" r="1.3" fill="#3a2814" opacity="0.7"/><circle cx="540.2" cy="495.9" r="0.9" fill="#ffffff" opacity="0.7"/><circle cx="535.5" cy="522.8" r="0.9" fill="#6a4828" opacity="0.7"/><circle cx="460.2" cy="510.3" r="1.3" fill="#8a6038" opacity="0.7"/><circle cx="451.3" cy="517.7" r="0.9" fill="#2a2018" opacity="0.7"/><circle cx="576.0" cy="471.8" r="1.2" fill="#2a2018" opacity="0.7"/><circle cx="572.7" cy="503.5" r="1.3" fill="#4a3018" opacity="0.7"/><circle cx="442.6" cy="501.2" r="0.7" fill="#8a6038" opacity="0.7"/><circle cx="543.7" cy="467.7" r="0.9" fill="#2a2018" opacity="0.7"/><circle cx="588.3" cy="479.7" r="0.9" fill="#ffffff" opacity="0.7"/><circle cx="449.6" cy="499.6" r="0.9" fill="#3a2814" opacity="0.7"/><circle cx="440.3" cy="534.9" r="0.6" fill="#2a2018" opacity="0.7"/><circle cx="527.3" cy="471.7" r="1.0" fill="#ffffff" opacity="0.7"/><circle cx="486.4" cy="511.6" r="0.9" fill="#ffffff" opacity="0.7"/><circle cx="506.8" cy="497.8" r="0.8" fill="#6a4828" opacity="0.7"/><circle cx="408.6" cy="497.1" r="1.2" fill="#3a2814" opacity="0.7"/><circle cx="576.2" cy="519.3" r="0.8" fill="#ece0c4" opacity="0.7"/><circle cx="416.1" cy="538.0" r="0.6" fill="#ece0c4" opacity="0.7"/><circle cx="581.8" cy="519.6" r="0.9" fill="#ffffff" opacity="0.7"/><circle cx="456.1" cy="586.2" r="0.6" fill="#4a3018" opacity="0.7"/><circle cx="480.4" cy="578.4" r="1.4" fill="#ffffff" opacity="0.7"/><circle cx="502.5" cy="532.6" r="0.7" fill="#ffffff" opacity="0.7"/><circle cx="501.3" cy="565.7" r="0.6" fill="#ffffff" opacity="0.7"/><circle cx="416.0" cy="548.3" r="1.1" fill="#4a3018" opacity="0.7"/><circle cx="443.1" cy="558.6" r="0.6" fill="#f4e8d0" opacity="0.7"/><circle cx="430.2" cy="500.4" r="0.5" fill="#4a3018" opacity="0.7"/><circle cx="453.8" cy="531.4" r="1.1" fill="#8a6038" opacity="0.7"/><circle cx="579.0" cy="533.7" r="1.0" fill="#ece0c4" opacity="0.7"/><circle cx="395.3" cy="523.8" r="0.5" fill="#3a2814" opacity="0.7"/><circle cx="430.7" cy="597.2" r="0.6" fill="#2a2018" opacity="0.7"/><circle cx="438.0" cy="525.8" r="0.7" fill="#8a6038" opacity="0.7"/><circle cx="396.3" cy="512.4" r="0.8" fill="#2a2018" opacity="0.7"/><circle cx="403.5" cy="536.8" r="0.8" fill="#ece0c4" opacity="0.7"/><circle cx="565.3" cy="495.8" r="0.7" fill="#ece0c4" opacity="0.7"/><circle cx="580.2" cy="476.9" r="1.0" fill="#ffffff" opacity="0.7"/><circle cx="581.7" cy="535.2" r="1.4" fill="#4a3018" opacity="0.7"/><circle cx="420.5" cy="521.0" r="0.5" fill="#ece0c4" opacity="0.7"/><circle cx="517.2" cy="524.4" r="0.7" fill="#4a3018" opacity="0.7"/><circle cx="485.7" cy="570.4" r="1.2" fill="#8a6038" opacity="0.7"/><circle cx="459.8" cy="488.8" r="0.5" fill="#ffffff" opacity="0.7"/><circle cx="531.9" cy="518.7" r="1.4" fill="#8a6038" opacity="0.7"/><circle cx="470.7" cy="579.2" r="1.2" fill="#3a2814" opacity="0.7"/><circle cx="490.8" cy="517.8" r="0.7" fill="#ffffff" opacity="0.7"/><circle cx="395.5" cy="523.7" r="0.5" fill="#2a2018" opacity="0.7"/><circle cx="586.8" cy="499.8" r="1.3" fill="#f4e8d0" opacity="0.7"/><circle cx="461.9" cy="502.2" r="0.7" fill="#4a3018" opacity="0.7"/><circle cx="543.1" cy="509.1" r="0.8" fill="#3a2814" opacity="0.7"/><circle cx="544.1" cy="552.3" r="0.5" fill="#f4e8d0" opacity="0.7"/><circle cx="439.3" cy="533.7" r="1.4" fill="#ffffff" opacity="0.7"/><circle cx="472.1" cy="498.9" r="1.2" fill="#2a2018" opacity="0.7"/><circle cx="417.5" cy="537.0" r="1.2" fill="#4a3018" opacity="0.7"/><circle cx="459.5" cy="509.5" r="1.2" fill="#8a6038" opacity="0.7"/><circle cx="517.1" cy="539.3" r="1.2" fill="#2a2018" opacity="0.7"/><circle cx="396.3" cy="545.7" r="0.6" fill="#8a6038" opacity="0.7"/><circle cx="404.5" cy="556.8" r="0.6" fill="#ece0c4" opacity="0.7"/><circle cx="496.2" cy="570.0" r="0.7" fill="#ffffff" opacity="0.7"/><circle cx="417.6" cy="531.4" r="1.2" fill="#ece0c4" opacity="0.7"/><circle cx="415.1" cy="590.3" r="0.8" fill="#3a2814" opacity="0.7"/><circle cx="446.5" cy="499.4" r="0.7" fill="#3a2814" opacity="0.7"/><circle cx="442.2" cy="498.0" r="0.8" fill="#6a4828" opacity="0.7"/><circle cx="584.1" cy="489.2" r="0.9" fill="#f4e8d0" opacity="0.7"/><circle cx="438.7" cy="585.3" r="1.4" fill="#ffffff" opacity="0.7"/><circle cx="411.0" cy="533.6" r="1.3" fill="#ece0c4" opacity="0.7"/><circle cx="485.6" cy="500.3" r="0.6" fill="#4a3018" opacity="0.7"/><circle cx="517.2" cy="556.1" r="0.5" fill="#ece0c4" opacity="0.7"/><circle cx="476.9" cy="517.6" r="0.6" fill="#3a2814" opacity="0.7"/><circle cx="395.8" cy="536.8" r="0.6" fill="#ffffff" opacity="0.7"/><circle cx="410.8" cy="521.3" r="1.1" fill="#6a4828" opacity="0.7"/><circle cx="538.5" cy="523.5" r="1.1" fill="#3a2814" opacity="0.7"/><circle cx="527.6" cy="520.6" r="0.7" fill="#2a2018" opacity="0.7"/><circle cx="390.3" cy="599.8" r="0.6" fill="#2a2018" opacity="0.7"/><circle cx="408.5" cy="549.6" r="0.9" fill="#8a6038" opacity="0.7"/><circle cx="507.6" cy="559.3" r="0.6" fill="#2a2018" opacity="0.7"/><circle cx="522.8" cy="517.5" r="0.6" fill="#6a4828" opacity="0.7"/><circle cx="449.9" cy="540.8" r="0.6" fill="#f4e8d0" opacity="0.7"/><circle cx="596.9" cy="490.6" r="1.3" fill="#6a4828" opacity="0.7"/><circle cx="398.4" cy="601.5" r="0.5" fill="#8a6038" opacity="0.7"/><circle cx="588.1" cy="520.1" r="1.1" fill="#6a4828" opacity="0.7"/><circle cx="521.2" cy="490.4" r="0.7" fill="#ffffff" opacity="0.7"/><circle cx="435.9" cy="522.0" r="0.8" fill="#6a4828" opacity="0.7"/><circle cx="415.5" cy="498.3" r="0.5" fill="#ece0c4" opacity="0.7"/><circle cx="397.2" cy="589.9" r="0.9" fill="#f4e8d0" opacity="0.7"/><circle cx="455.3" cy="498.6" r="1.1" fill="#2a2018" opacity="0.7"/><circle cx="485.1" cy="527.9" r="0.5" fill="#4a3018" opacity="0.7"/><circle cx="601.0" cy="532.1" r="1.2" fill="#ffffff" opacity="0.7"/><circle cx="556.7" cy="531.0" r="1.2" fill="#6a4828" opacity="0.7"/><circle cx="466.1" cy="516.6" r="1.0" fill="#ffffff" opacity="0.7"/><circle cx="456.5" cy="571.7" r="0.5" fill="#f4e8d0" opacity="0.7"/><circle cx="497.3" cy="518.6" r="0.5" fill="#6a4828" opacity="0.7"/><circle cx="403.3" cy="555.2" r="0.7" fill="#f4e8d0" opacity="0.7"/><circle cx="424.5" cy="582.2" r="0.6" fill="#ece0c4" opacity="0.7"/><circle cx="464.4" cy="577.2" r="0.8" fill="#6a4828" opacity="0.7"/><circle cx="487.1" cy="499.4" r="0.7" fill="#ffffff" opacity="0.7"/><circle cx="445.5" cy="538.4" r="0.8" fill="#8a6038" opacity="0.7"/><circle cx="431.8" cy="522.5" r="1.1" fill="#3a2814" opacity="0.7"/><circle cx="581.5" cy="486.2" r="0.6" fill="#3a2814" opacity="0.7"/><circle cx="503.1" cy="558.6" r="1.4" fill="#8a6038" opacity="0.7"/><circle cx="486.4" cy="540.8" r="0.7" fill="#f4e8d0" opacity="0.7"/><circle cx="547.7" cy="517.6" r="1.4" fill="#2a2018" opacity="0.7"/><circle cx="513.1" cy="515.8" r="0.9" fill="#f4e8d0" opacity="0.7"/><circle cx="427.0" cy="575.3" r="0.8" fill="#4a3018" opacity="0.7"/><circle cx="500.0" cy="508.1" r="1.2" fill="#8a6038" opacity="0.7"/><circle cx="549.6" cy="494.4" r="1.1" fill="#3a2814" opacity="0.7"/><circle cx="481.9" cy="539.5" r="0.6" fill="#4a3018" opacity="0.7"/><circle cx="437.9" cy="561.2" r="0.5" fill="#4a3018" opacity="0.7"/><circle cx="510.9" cy="507.1" r="1.0" fill="#8a6038" opacity="0.7"/><circle cx="477.8" cy="506.7" r="0.7" fill="#6a4828" opacity="0.7"/><circle cx="523.1" cy="533.6" r="0.5" fill="#6a4828" opacity="0.7"/><circle cx="420.1" cy="563.1" r="0.9" fill="#3a2814" opacity="0.7"/><circle cx="527.7" cy="547.2" r="1.0" fill="#8a6038" opacity="0.7"/><circle cx="513.4" cy="553.3" r="0.7" fill="#ffffff" opacity="0.7"/><circle cx="503.3" cy="522.9" r="0.6" fill="#ece0c4" opacity="0.7"/><circle cx="585.0" cy="476.3" r="0.6" fill="#ece0c4" opacity="0.7"/><circle cx="431.9" cy="554.3" r="1.2" fill="#2a2018" opacity="0.7"/><circle cx="426.5" cy="508.0" r="1.1" fill="#3a2814" opacity="0.7"/><circle cx="491.8" cy="543.5" r="1.3" fill="#2a2018" opacity="0.7"/><circle cx="549.2" cy="532.1" r="0.7" fill="#ffffff" opacity="0.7"/><circle cx="603.3" cy="500.5" r="0.6" fill="#4a3018" opacity="0.7"/><circle cx="591.7" cy="500.8" r="0.7" fill="#4a3018" opacity="0.7"/><circle cx="508.1" cy="527.6" r="0.8" fill="#3a2814" opacity="0.7"/><circle cx="407.4" cy="538.7" r="0.7" fill="#6a4828" opacity="0.7"/><circle cx="439.8" cy="575.3" r="1.2" fill="#6a4828" opacity="0.7"/><circle cx="459.6" cy="497.1" r="0.9" fill="#ffffff" opacity="0.7"/><circle cx="394.7" cy="608.1" r="1.0" fill="#ece0c4" opacity="0.7"/><circle cx="455.2" cy="492.9" r="1.0" fill="#f4e8d0" opacity="0.7"/><circle cx="413.1" cy="556.4" r="0.8" fill="#6a4828" opacity="0.7"/><circle cx="398.0" cy="567.4" r="1.1" fill="#4a3018" opacity="0.7"/><circle cx="547.4" cy="470.2" r="0.7" fill="#8a6038" opacity="0.7"/><circle cx="471.5" cy="498.2" r="0.6" fill="#ece0c4" opacity="0.7"/><circle cx="396.4" cy="591.4" r="1.2" fill="#f4e8d0" opacity="0.7"/><circle cx="524.8" cy="504.5" r="0.6" fill="#f4e8d0" opacity="0.7"/><circle cx="452.3" cy="512.2" r="0.5" fill="#3a2814" opacity="0.7"/><circle cx="444.2" cy="503.8" r="1.3" fill="#8a6038" opacity="0.7"/><circle cx="491.4" cy="504.6" r="1.2" fill="#4a3018" opacity="0.7"/><circle cx="395.7" cy="540.4" r="0.8" fill="#f4e8d0" opacity="0.7"/><circle cx="540.5" cy="543.4" r="1.1" fill="#ece0c4" opacity="0.7"/><circle cx="450.7" cy="527.6" r="0.8" fill="#ece0c4" opacity="0.7"/><circle cx="550.4" cy="468.4" r="0.9" fill="#8a6038" opacity="0.7"/><circle cx="428.7" cy="536.7" r="1.4" fill="#8a6038" opacity="0.7"/><circle cx="499.8" cy="549.6" r="0.8" fill="#6a4828" opacity="0.7"/><circle cx="435.2" cy="568.4" r="0.6" fill="#ffffff" opacity="0.7"/><circle cx="509.7" cy="476.2" r="0.8" fill="#8a6038" opacity="0.7"/><circle cx="475.3" cy="521.2" r="0.9" fill="#f4e8d0" opacity="0.7"/><circle cx="527.9" cy="517.7" r="0.7" fill="#3a2814" opacity="0.7"/><circle cx="582.8" cy="537.7" r="1.4" fill="#2a2018" opacity="0.7"/><circle cx="416.3" cy="552.1" r="0.8" fill="#4a3018" opacity="0.7"/><circle cx="548.5" cy="486.3" r="1.1" fill="#ffffff" opacity="0.7"/><circle cx="444.3" cy="495.8" r="0.9" fill="#8a6038" opacity="0.7"/><circle cx="579.3" cy="496.9" r="0.7" fill="#ece0c4" opacity="0.7"/><circle cx="518.6" cy="514.0" r="0.8" fill="#ece0c4" opacity="0.7"/><circle cx="545.7" cy="475.8" r="0.7" fill="#f4e8d0" opacity="0.7"/><circle cx="454.0" cy="506.1" r="0.7" fill="#3a2814" opacity="0.7"/><circle cx="526.2" cy="476.6" r="1.3" fill="#ece0c4" opacity="0.7"/><circle cx="572.7" cy="527.7" r="1.0" fill="#ece0c4" opacity="0.7"/><circle cx="525.0" cy="531.8" r="0.7" fill="#6a4828" opacity="0.7"/><circle cx="441.1" cy="592.2" r="1.3" fill="#2a2018" opacity="0.7"/><circle cx="514.5" cy="495.4" r="1.1" fill="#6a4828" opacity="0.7"/><circle cx="486.6" cy="508.5" r="1.3" fill="#f4e8d0" opacity="0.7"/><circle cx="441.1" cy="522.0" r="0.7" fill="#6a4828" opacity="0.7"/><circle cx="480.1" cy="530.6" r="1.0" fill="#2a2018" opacity="0.7"/><circle cx="581.3" cy="510.8" r="0.8" fill="#4a3018" opacity="0.7"/><circle cx="397.2" cy="544.2" r="1.1" fill="#6a4828" opacity="0.7"/><circle cx="593.5" cy="491.0" r="0.6" fill="#8a6038" opacity="0.7"/><circle cx="512.5" cy="543.9" r="1.0" fill="#ffffff" opacity="0.7"/><circle cx="501.2" cy="523.6" r="0.7" fill="#ffffff" opacity="0.7"/><circle cx="536.1" cy="520.8" r="1.2" fill="#f4e8d0" opacity="0.7"/><circle cx="521.0" cy="558.8" r="0.7" fill="#3a2814" opacity="0.7"/><circle cx="479.0" cy="525.2" r="1.0" fill="#8a6038" opacity="0.7"/><circle cx="412.5" cy="507.0" r="1.3" fill="#2a2018" opacity="0.7"/><circle cx="502.3" cy="493.9" r="0.9" fill="#2a2018" opacity="0.7"/><circle cx="403.8" cy="583.8" r="0.9" fill="#ece0c4" opacity="0.7"/><circle cx="509.8" cy="495.0" r="0.8" fill="#6a4828" opacity="0.7"/><circle cx="564.5" cy="532.6" r="1.2" fill="#3a2814" opacity="0.7"/><circle cx="438.5" cy="569.2" r="1.4" fill="#3a2814" opacity="0.7"/><circle cx="534.9" cy="534.6" r="0.8" fill="#3a2814" opacity="0.7"/><circle cx="529.7" cy="509.6" r="0.9" fill="#ffffff" opacity="0.7"/><circle cx="526.0" cy="562.2" r="0.6" fill="#8a6038" opacity="0.7"/><circle cx="454.2" cy="519.7" r="1.2" fill="#f4e8d0" opacity="0.7"/><circle cx="419.2" cy="588.9" r="1.1" fill="#4a3018" opacity="0.7"/><circle cx="452.0" cy="554.3" r="1.3" fill="#6a4828" opacity="0.7"/><circle cx="428.9" cy="530.1" r="0.7" fill="#6a4828" opacity="0.7"/><circle cx="475.5" cy="542.9" r="1.1" fill="#f4e8d0" opacity="0.7"/><circle cx="569.3" cy="490.6" r="1.0" fill="#ece0c4" opacity="0.7"/><circle cx="548.5" cy="528.0" r="1.0" fill="#f4e8d0" opacity="0.7"/><circle cx="445.9" cy="496.3" r="0.9" fill="#6a4828" opacity="0.7"/><circle cx="508.8" cy="535.1" r="1.1" fill="#6a4828" opacity="0.7"/><circle cx="423.5" cy="509.7" r="1.1" fill="#ffffff" opacity="0.7"/><circle cx="569.7" cy="518.1" r="1.4" fill="#2a2018" opacity="0.7"/><circle cx="534.3" cy="488.0" r="1.1" fill="#8a6038" opacity="0.7"/><circle cx="395.1" cy="554.5" r="1.2" fill="#8a6038" opacity="0.7"/><circle cx="409.2" cy="535.0" r="0.5" fill="#6a4828" opacity="0.7"/><circle cx="467.7" cy="533.6" r="0.8" fill="#ece0c4" opacity="0.7"/><circle cx="462.5" cy="499.0" r="1.2" fill="#4a3018" opacity="0.7"/><circle cx="452.0" cy="588.3" r="0.8" fill="#2a2018" opacity="0.7"/><circle cx="463.1" cy="491.5" r="1.2" fill="#ffffff" opacity="0.7"/><circle cx="460.1" cy="509.1" r="0.6" fill="#3a2814" opacity="0.7"/><circle cx="603.2" cy="521.8" r="1.0" fill="#2a2018" opacity="0.7"/><circle cx="399.7" cy="506.6" r="0.5" fill="#4a3018" opacity="0.7"/><circle cx="565.7" cy="533.6" r="1.2" fill="#4a3018" opacity="0.7"/><circle cx="521.6" cy="557.2" r="0.7" fill="#f4e8d0" opacity="0.7"/><circle cx="532.4" cy="531.0" r="0.6" fill="#6a4828" opacity="0.7"/><circle cx="530.0" cy="517.2" r="1.2" fill="#6a4828" opacity="0.7"/><circle cx="509.9" cy="500.0" r="0.7" fill="#3a2814" opacity="0.7"/><circle cx="510.8" cy="549.6" r="0.9" fill="#4a3018" opacity="0.7"/><circle cx="555.4" cy="525.3" r="0.9" fill="#2a2018" opacity="0.7"/><circle cx="392.0" cy="520.0" r="0.9" fill="#6a4828" opacity="0.7"/><circle cx="527.6" cy="492.9" r="1.1" fill="#6a4828" opacity="0.7"/><circle cx="573.6" cy="493.8" r="0.6" fill="#f4e8d0" opacity="0.7"/><circle cx="392.8" cy="571.5" r="0.9" fill="#ece0c4" opacity="0.7"/><circle cx="467.7" cy="575.8" r="1.2" fill="#6a4828" opacity="0.7"/><circle cx="407.1" cy="557.4" r="0.9" fill="#ffffff" opacity="0.7"/><circle cx="589.5" cy="499.4" r="1.1" fill="#4a3018" opacity="0.7"/><circle cx="406.1" cy="508.2" r="1.4" fill="#6a4828" opacity="0.7"/><circle cx="545.5" cy="532.8" r="0.6" fill="#6a4828" opacity="0.7"/><circle cx="560.4" cy="516.3" r="1.1" fill="#6a4828" opacity="0.7"/><circle cx="478.9" cy="519.8" r="1.4" fill="#ffffff" opacity="0.7"/><circle cx="557.7" cy="547.9" r="0.8" fill="#3a2814" opacity="0.7"/><circle cx="522.7" cy="560.9" r="1.3" fill="#8a6038" opacity="0.7"/><circle cx="421.5" cy="589.1" r="1.4" fill="#2a2018" opacity="0.7"/><circle cx="441.9" cy="520.0" r="1.0" fill="#2a2018" opacity="0.7"/><circle cx="445.6" cy="525.5" r="0.8" fill="#4a3018" opacity="0.7"/><circle cx="419.2" cy="598.0" r="0.7" fill="#6a4828" opacity="0.7"/><circle cx="432.1" cy="576.3" r="0.8" fill="#ece0c4" opacity="0.7"/><circle cx="401.4" cy="521.3" r="1.3" fill="#ece0c4" opacity="0.7"/><circle cx="471.8" cy="543.8" r="1.2" fill="#8a6038" opacity="0.7"/><circle cx="439.1" cy="549.8" r="1.3" fill="#3a2814" opacity="0.7"/><circle cx="501.2" cy="533.9" r="0.7" fill="#ece0c4" opacity="0.7"/><circle cx="539.7" cy="516.2" r="0.9" fill="#8a6038" opacity="0.7"/><circle cx="500.2" cy="483.1" r="1.3" fill="#4a3018" opacity="0.7"/><circle cx="468.9" cy="531.8" r="0.6" fill="#f4e8d0" opacity="0.7"/><circle cx="517.4" cy="513.5" r="0.6" fill="#4a3018" opacity="0.7"/><circle cx="433.0" cy="595.0" r="1.0" fill="#ffffff" opacity="0.7"/><circle cx="485.1" cy="551.9" r="0.7" fill="#6a4828" opacity="0.7"/><circle cx="400.0" cy="546.4" r="0.9" fill="#ffffff" opacity="0.7"/><circle cx="408.3" cy="509.4" r="1.1" fill="#ece0c4" opacity="0.7"/><circle cx="473.5" cy="529.5" r="0.8" fill="#6a4828" opacity="0.7"/><circle cx="439.6" cy="571.7" r="0.5" fill="#6a4828" opacity="0.7"/><circle cx="444.0" cy="514.6" r="1.3" fill="#4a3018" opacity="0.7"/><circle cx="399.1" cy="581.9" r="0.6" fill="#ffffff" opacity="0.7"/><circle cx="420.1" cy="577.0" r="1.1" fill="#ece0c4" opacity="0.7"/><circle cx="453.2" cy="551.7" r="0.9" fill="#f4e8d0" opacity="0.7"/><circle cx="468.9" cy="520.5" r="0.9" fill="#8a6038" opacity="0.7"/><circle cx="425.2" cy="497.0" r="1.3" fill="#6a4828" opacity="0.7"/><circle cx="580.8" cy="532.5" r="1.2" fill="#ece0c4" opacity="0.7"/><circle cx="422.7" cy="589.1" r="1.3" fill="#f4e8d0" opacity="0.7"/><circle cx="419.0" cy="529.3" r="1.3" fill="#f4e8d0" opacity="0.7"/><circle cx="458.4" cy="496.3" r="1.1" fill="#f4e8d0" opacity="0.7"/><circle cx="419.7" cy="494.4" r="0.7" fill="#4a3018" opacity="0.7"/><circle cx="483.4" cy="483.2" r="0.9" fill="#2a2018" opacity="0.7"/><circle cx="422.5" cy="502.0" r="0.8" fill="#3a2814" opacity="0.7"/><circle cx="425.1" cy="536.1" r="0.9" fill="#8a6038" opacity="0.7"/><circle cx="492.7" cy="483.8" r="1.1" fill="#4a3018" opacity="0.7"/><circle cx="414.6" cy="577.0" r="0.9" fill="#8a6038" opacity="0.7"/><circle cx="445.2" cy="497.0" r="0.6" fill="#ece0c4" opacity="0.7"/><circle cx="401.4" cy="572.6" r="0.6" fill="#3a2814" opacity="0.7"/><circle cx="526.6" cy="528.5" r="1.0" fill="#8a6038" opacity="0.7"/><circle cx="591.9" cy="504.4" r="0.9" fill="#8a6038" opacity="0.7"/><circle cx="585.1" cy="493.8" r="0.6" fill="#6a4828" opacity="0.7"/><circle cx="427.7" cy="579.4" r="0.7" fill="#6a4828" opacity="0.7"/><circle cx="519.8" cy="536.8" r="0.7" fill="#3a2814" opacity="0.7"/><circle cx="418.5" cy="563.8" r="1.0" fill="#ece0c4" opacity="0.7"/><circle cx="546.5" cy="523.3" r="1.0" fill="#4a3018" opacity="0.7"/><circle cx="463.7" cy="503.7" r="0.6" fill="#ffffff" opacity="0.7"/><circle cx="477.0" cy="578.3" r="1.3" fill="#6a4828" opacity="0.7"/><circle cx="446.2" cy="488.8" r="0.5" fill="#8a6038" opacity="0.7"/><circle cx="540.0" cy="549.1" r="0.8" fill="#4a3018" opacity="0.7"/><circle cx="404.3" cy="515.3" r="1.2" fill="#ece0c4" opacity="0.7"/><circle cx="575.1" cy="509.8" r="1.0" fill="#2a2018" opacity="0.7"/><circle cx="582.1" cy="505.2" r="1.4" fill="#f4e8d0" opacity="0.7"/><circle cx="495.4" cy="539.6" r="0.5" fill="#6a4828" opacity="0.7"/><circle cx="597.0" cy="494.7" r="0.7" fill="#6a4828" opacity="0.7"/><circle cx="456.1" cy="546.1" r="0.5" fill="#4a3018" opacity="0.7"/><circle cx="445.2" cy="589.8" r="1.0" fill="#ffffff" opacity="0.7"/><circle cx="540.1" cy="475.9" r="1.1" fill="#f4e8d0" opacity="0.7"/><circle cx="495.1" cy="537.6" r="0.6" fill="#3a2814" opacity="0.7"/><circle cx="415.1" cy="597.1" r="1.3" fill="#ece0c4" opacity="0.7"/><circle cx="420.7" cy="548.8" r="0.6" fill="#2a2018" opacity="0.7"/><circle cx="472.6" cy="525.2" r="0.9" fill="#4a3018" opacity="0.7"/><circle cx="461.8" cy="497.3" r="1.1" fill="#8a6038" opacity="0.7"/><circle cx="601.0" cy="509.7" r="1.3" fill="#2a2018" opacity="0.7"/><circle cx="400.5" cy="540.2" r="0.7" fill="#8a6038" opacity="0.7"/><circle cx="479.8" cy="558.1" r="0.6" fill="#8a6038" opacity="0.7"/><circle cx="429.3" cy="510.3" r="1.0" fill="#ece0c4" opacity="0.7"/><circle cx="526.9" cy="501.2" r="1.1" fill="#3a2814" opacity="0.7"/><circle cx="463.7" cy="485.9" r="1.0" fill="#4a3018" opacity="0.7"/><circle cx="446.7" cy="532.3" r="0.9" fill="#6a4828" opacity="0.7"/><circle cx="447.9" cy="574.1" r="1.3" fill="#3a2814" opacity="0.7"/><circle cx="520.1" cy="548.4" r="0.7" fill="#2a2018" opacity="0.7"/><circle cx="541.7" cy="531.4" r="1.1" fill="#3a2814" opacity="0.7"/><circle cx="489.8" cy="508.1" r="0.8" fill="#ece0c4" opacity="0.7"/><circle cx="429.6" cy="544.6" r="0.5" fill="#2a2018" opacity="0.7"/><circle cx="440.3" cy="546.3" r="0.7" fill="#ffffff" opacity="0.7"/><circle cx="577.9" cy="493.5" r="1.2" fill="#4a3018" opacity="0.7"/><circle cx="576.3" cy="528.2" r="1.0" fill="#4a3018" opacity="0.7"/><circle cx="568.4" cy="514.9" r="1.0" fill="#f4e8d0" opacity="0.7"/><circle cx="589.8" cy="524.6" r="0.6" fill="#8a6038" opacity="0.7"/><circle cx="432.5" cy="554.7" r="1.2" fill="#3a2814" opacity="0.7"/><circle cx="416.4" cy="595.0" r="0.9" fill="#4a3018" opacity="0.7"/><circle cx="507.2" cy="478.2" r="1.4" fill="#2a2018" opacity="0.7"/><circle cx="512.0" cy="524.8" r="1.3" fill="#3a2814" opacity="0.7"/><circle cx="519.6" cy="518.8" r="1.1" fill="#ffffff" opacity="0.7"/><circle cx="450.9" cy="514.7" r="0.9" fill="#8a6038" opacity="0.7"/><circle cx="508.4" cy="519.6" r="0.5" fill="#8a6038" opacity="0.7"/><circle cx="470.8" cy="506.5" r="1.2" fill="#3a2814" opacity="0.7"/><circle cx="482.7" cy="518.4" r="0.6" fill="#ece0c4" opacity="0.7"/><circle cx="586.8" cy="510.2" r="1.4" fill="#ece0c4" opacity="0.7"/><circle cx="432.9" cy="526.1" r="0.5" fill="#4a3018" opacity="0.7"/><circle cx="453.5" cy="543.1" r="1.0" fill="#3a2814" opacity="0.7"/><circle cx="500.2" cy="566.2" r="0.9" fill="#2a2018" opacity="0.7"/><circle cx="397.8" cy="564.8" r="1.4" fill="#ffffff" opacity="0.7"/><circle cx="534.4" cy="541.4" r="0.9" fill="#f4e8d0" opacity="0.7"/><circle cx="496.7" cy="560.5" r="1.3" fill="#6a4828" opacity="0.7"/><circle cx="596.4" cy="535.4" r="1.2" fill="#ffffff" opacity="0.7"/><circle cx="408.8" cy="516.2" r="1.4" fill="#8a6038" opacity="0.7"/><circle cx="566.6" cy="539.5" r="1.1" fill="#f4e8d0" opacity="0.7"/><circle cx="452.4" cy="513.2" r="1.1" fill="#2a2018" opacity="0.7"/><circle cx="510.5" cy="476.5" r="1.1" fill="#4a3018" opacity="0.7"/><circle cx="541.8" cy="545.7" r="0.9" fill="#3a2814" opacity="0.7"/><circle cx="554.3" cy="547.9" r="1.0" fill="#6a4828" opacity="0.7"/><circle cx="422.7" cy="577.7" r="0.5" fill="#f4e8d0" opacity="0.7"/><circle cx="494.4" cy="532.5" r="1.2" fill="#2a2018" opacity="0.7"/><circle cx="554.7" cy="510.0" r="0.8" fill="#ece0c4" opacity="0.7"/><circle cx="425.4" cy="501.3" r="1.3" fill="#f4e8d0" opacity="0.7"/><circle cx="430.2" cy="556.7" r="0.5" fill="#4a3018" opacity="0.7"/><circle cx="595.3" cy="528.1" r="0.7" fill="#ece0c4" opacity="0.7"/><circle cx="398.5" cy="604.3" r="0.8" fill="#6a4828" opacity="0.7"/><circle cx="454.3" cy="553.4" r="1.4" fill="#ffffff" opacity="0.7"/><circle cx="403.5" cy="565.0" r="0.9" fill="#ece0c4" opacity="0.7"/><circle cx="474.7" cy="570.3" r="1.2" fill="#4a3018" opacity="0.7"/><circle cx="466.1" cy="488.9" r="0.9" fill="#3a2814" opacity="0.7"/><circle cx="467.0" cy="511.9" r="0.8" fill="#2a2018" opacity="0.7"/><circle cx="508.1" cy="520.0" r="0.8" fill="#ffffff" opacity="0.7"/><circle cx="531.8" cy="512.9" r="0.7" fill="#6a4828" opacity="0.7"/><circle cx="508.3" cy="532.4" r="0.6" fill="#ece0c4" opacity="0.7"/><circle cx="464.9" cy="572.0" r="1.1" fill="#2a2018" opacity="0.7"/><circle cx="513.9" cy="506.1" r="1.0" fill="#ffffff" opacity="0.7"/><circle cx="437.9" cy="530.2" r="1.3" fill="#6a4828" opacity="0.7"/><circle cx="504.0" cy="522.6" r="0.6" fill="#ece0c4" opacity="0.7"/><circle cx="408.7" cy="592.0" r="0.5" fill="#2a2018" opacity="0.7"/><circle cx="543.4" cy="482.5" r="0.9" fill="#4a3018" opacity="0.7"/><circle cx="572.0" cy="509.8" r="0.6" fill="#f4e8d0" opacity="0.7"/><circle cx="552.1" cy="489.9" r="0.6" fill="#3a2814" opacity="0.7"/><circle cx="451.0" cy="586.6" r="0.8" fill="#2a2018" opacity="0.7"/><circle cx="574.2" cy="480.5" r="0.7" fill="#3a2814" opacity="0.7"/><circle cx="394.4" cy="569.1" r="0.7" fill="#ffffff" opacity="0.7"/><circle cx="571.0" cy="514.6" r="0.7" fill="#f4e8d0" opacity="0.7"/><circle cx="413.8" cy="601.5" r="1.1" fill="#ece0c4" opacity="0.7"/><circle cx="454.2" cy="519.0" r="1.0" fill="#4a3018" opacity="0.7"/><circle cx="510.4" cy="495.3" r="1.1" fill="#ffffff" opacity="0.7"/><circle cx="443.8" cy="527.4" r="1.3" fill="#8a6038" opacity="0.7"/><circle cx="413.1" cy="578.4" r="1.3" fill="#3a2814" opacity="0.7"/><circle cx="457.5" cy="580.5" r="1.2" fill="#8a6038" opacity="0.7"/><circle cx="407.5" cy="567.7" r="1.4" fill="#2a2018" opacity="0.7"/><circle cx="521.3" cy="494.2" r="0.8" fill="#f4e8d0" opacity="0.7"/><circle cx="593.2" cy="528.6" r="1.1" fill="#8a6038" opacity="0.7"/><circle cx="524.0" cy="530.2" r="1.1" fill="#4a3018" opacity="0.7"/><circle cx="433.3" cy="564.3" r="0.9" fill="#6a4828" opacity="0.7"/><circle cx="566.4" cy="546.7" r="1.0" fill="#6a4828" opacity="0.7"/><circle cx="505.9" cy="498.7" r="0.7" fill="#4a3018" opacity="0.7"/><circle cx="525.8" cy="481.3" r="1.1" fill="#ffffff" opacity="0.7"/><circle cx="440.1" cy="497.5" r="0.6" fill="#ffffff" opacity="0.7"/><circle cx="417.7" cy="569.7" r="0.8" fill="#ece0c4" opacity="0.7"/><circle cx="564.3" cy="545.0" r="1.1" fill="#6a4828" opacity="0.7"/><circle cx="569.5" cy="522.9" r="0.6" fill="#ece0c4" opacity="0.7"/><circle cx="451.2" cy="515.9" r="0.5" fill="#ece0c4" opacity="0.7"/><circle cx="581.6" cy="507.1" r="1.1" fill="#f4e8d0" opacity="0.7"/><circle cx="458.8" cy="532.6" r="0.8" fill="#8a6038" opacity="0.7"/><circle cx="460.3" cy="574.5" r="0.6" fill="#3a2814" opacity="0.7"/><circle cx="494.1" cy="527.3" r="1.2" fill="#ece0c4" opacity="0.7"/><circle cx="458.2" cy="515.7" r="1.1" fill="#f4e8d0" opacity="0.7"/><circle cx="529.3" cy="499.0" r="0.6" fill="#ece0c4" opacity="0.7"/><circle cx="474.0" cy="482.5" r="0.7" fill="#8a6038" opacity="0.7"/><circle cx="588.2" cy="486.1" r="1.2" fill="#3a2814" opacity="0.7"/><circle cx="459.2" cy="488.6" r="0.8" fill="#8a6038" opacity="0.7"/><circle cx="468.2" cy="545.4" r="1.3" fill="#8a6038" opacity="0.7"/><circle cx="412.1" cy="584.4" r="1.3" fill="#2a2018" opacity="0.7"/><circle cx="592.2" cy="536.6" r="1.2" fill="#ffffff" opacity="0.7"/><circle cx="523.7" cy="482.0" r="0.6" fill="#ece0c4" opacity="0.7"/><circle cx="483.5" cy="489.6" r="0.5" fill="#8a6038" opacity="0.7"/><circle cx="558.2" cy="525.9" r="0.6" fill="#3a2814" opacity="0.7"/><circle cx="400.9" cy="570.2" r="0.6" fill="#8a6038" opacity="0.7"/><circle cx="390.9" cy="608.2" r="1.3" fill="#6a4828" opacity="0.7"/><circle cx="424.4" cy="505.8" r="1.2" fill="#ffffff" opacity="0.7"/><circle cx="534.2" cy="548.0" r="0.6" fill="#ffffff" opacity="0.7"/><circle cx="458.6" cy="531.4" r="1.4" fill="#6a4828" opacity="0.7"/><circle cx="563.4" cy="469.3" r="1.0" fill="#8a6038" opacity="0.7"/><circle cx="452.9" cy="548.5" r="0.9" fill="#8a6038" opacity="0.7"/><circle cx="528.2" cy="506.4" r="1.0" fill="#8a6038" opacity="0.7"/><circle cx="436.8" cy="574.7" r="0.6" fill="#f4e8d0" opacity="0.7"/><circle cx="513.5" cy="546.0" r="0.8" fill="#2a2018" opacity="0.7"/><circle cx="440.7" cy="528.4" r="0.6" fill="#3a2814" opacity="0.7"/><circle cx="427.8" cy="597.9" r="0.7" fill="#f4e8d0" opacity="0.7"/><circle cx="429.3" cy="563.9" r="0.7" fill="#ffffff" opacity="0.7"/><circle cx="487.5" cy="543.9" r="1.2" fill="#f4e8d0" opacity="0.7"/><circle cx="561.1" cy="480.8" r="1.1" fill="#f4e8d0" opacity="0.7"/><circle cx="487.9" cy="566.3" r="1.4" fill="#6a4828" opacity="0.7"/><circle cx="430.2" cy="533.6" r="0.6" fill="#f4e8d0" opacity="0.7"/><circle cx="555.9" cy="468.9" r="0.5" fill="#ece0c4" opacity="0.7"/><circle cx="398.0" cy="568.8" r="0.9" fill="#ece0c4" opacity="0.7"/><circle cx="584.3" cy="473.6" r="1.0" fill="#ece0c4" opacity="0.7"/><circle cx="425.1" cy="575.5" r="1.2" fill="#8a6038" opacity="0.7"/><circle cx="444.0" cy="497.1" r="1.1" fill="#8a6038" opacity="0.7"/><circle cx="398.4" cy="553.6" r="0.8" fill="#f4e8d0" opacity="0.7"/><circle cx="459.4" cy="553.5" r="1.3" fill="#4a3018" opacity="0.7"/><circle cx="534.2" cy="499.5" r="1.1" fill="#ece0c4" opacity="0.7"/><circle cx="515.5" cy="498.8" r="1.4" fill="#3a2814" opacity="0.7"/><circle cx="392.0" cy="513.1" r="0.9" fill="#6a4828" opacity="0.7"/><circle cx="569.0" cy="471.6" r="1.3" fill="#2a2018" opacity="0.7"/><circle cx="485.4" cy="495.5" r="0.8" fill="#f4e8d0" opacity="0.7"/><circle cx="502.6" cy="508.2" r="1.0" fill="#6a4828" opacity="0.7"/><circle cx="466.6" cy="532.5" r="0.8" fill="#ffffff" opacity="0.7"/><circle cx="513.5" cy="511.7" r="0.7" fill="#4a3018" opacity="0.7"/><circle cx="419.9" cy="519.6" r="1.0" fill="#f4e8d0" opacity="0.7"/><circle cx="445.3" cy="548.2" r="1.4" fill="#6a4828" opacity="0.7"/><circle cx="396.3" cy="546.9" r="1.3" fill="#f4e8d0" opacity="0.7"/><circle cx="525.4" cy="516.3" r="1.2" fill="#3a2814" opacity="0.7"/><circle cx="440.2" cy="583.5" r="1.1" fill="#6a4828" opacity="0.7"/><circle cx="454.4" cy="578.3" r="1.0" fill="#8a6038" opacity="0.7"/><circle cx="525.6" cy="514.3" r="0.8" fill="#2a2018" opacity="0.7"/><circle cx="476.1" cy="521.4" r="1.3" fill="#3a2814" opacity="0.7"/><circle cx="515.2" cy="482.3" r="0.7" fill="#3a2814" opacity="0.7"/><circle cx="512.0" cy="562.1" r="0.6" fill="#8a6038" opacity="0.7"/><circle cx="514.8" cy="507.2" r="1.4" fill="#8a6038" opacity="0.7"/><circle cx="465.7" cy="580.0" r="1.1" fill="#2a2018" opacity="0.7"/><circle cx="457.6" cy="487.2" r="1.0" fill="#3a2814" opacity="0.7"/><circle cx="399.3" cy="529.4" r="1.3" fill="#3a2814" opacity="0.7"/><circle cx="528.3" cy="490.5" r="1.4" fill="#4a3018" opacity="0.7"/><circle cx="518.2" cy="472.3" r="1.1" fill="#8a6038" opacity="0.7"/><circle cx="390.1" cy="501.9" r="1.1" fill="#4a3018" opacity="0.7"/><circle cx="587.4" cy="492.9" r="1.3" fill="#8a6038" opacity="0.7"/><circle cx="394.8" cy="535.4" r="0.7" fill="#8a6038" opacity="0.7"/><circle cx="407.7" cy="555.0" r="1.4" fill="#ffffff" opacity="0.7"/><circle cx="457.1" cy="561.4" r="0.6" fill="#8a6038" opacity="0.7"/><circle cx="553.9" cy="473.9" r="0.9" fill="#8a6038" opacity="0.7"/><circle cx="504.8" cy="551.2" r="1.1" fill="#6a4828" opacity="0.7"/><circle cx="518.3" cy="511.3" r="1.2" fill="#3a2814" opacity="0.7"/><circle cx="528.2" cy="561.0" r="1.0" fill="#ffffff" opacity="0.7"/><circle cx="466.7" cy="542.1" r="0.6" fill="#3a2814" opacity="0.7"/><circle cx="390.9" cy="533.7" r="0.6" fill="#8a6038" opacity="0.7"/><circle cx="524.2" cy="522.1" r="1.3" fill="#f4e8d0" opacity="0.7"/><circle cx="523.3" cy="478.9" r="1.0" fill="#ece0c4" opacity="0.7"/><circle cx="467.6" cy="483.1" r="1.3" fill="#6a4828" opacity="0.7"/><circle cx="502.6" cy="514.4" r="0.9" fill="#ece0c4" opacity="0.7"/><circle cx="573.9" cy="493.0" r="1.3" fill="#8a6038" opacity="0.7"/><circle cx="472.6" cy="492.9" r="0.6" fill="#4a3018" opacity="0.7"/><circle cx="546.7" cy="470.1" r="1.1" fill="#2a2018" opacity="0.7"/><circle cx="464.4" cy="495.4" r="0.9" fill="#2a2018" opacity="0.7"/><circle cx="523.8" cy="494.7" r="0.5" fill="#3a2814" opacity="0.7"/><circle cx="541.5" cy="497.5" r="0.7" fill="#8a6038" opacity="0.7"/><circle cx="435.6" cy="548.3" r="0.9" fill="#6a4828" opacity="0.7"/><circle cx="594.2" cy="481.2" r="0.8" fill="#3a2814" opacity="0.7"/><circle cx="460.3" cy="535.3" r="0.6" fill="#ece0c4" opacity="0.7"/><circle cx="535.8" cy="552.6" r="0.7" fill="#ffffff" opacity="0.7"/><circle cx="400.2" cy="581.2" r="0.5" fill="#8a6038" opacity="0.7"/><circle cx="555.4" cy="528.1" r="1.3" fill="#2a2018" opacity="0.7"/><circle cx="602.9" cy="506.1" r="1.2" fill="#4a3018" opacity="0.7"/><circle cx="417.7" cy="506.9" r="0.6" fill="#8a6038" opacity="0.7"/><circle cx="425.3" cy="565.8" r="0.9" fill="#f4e8d0" opacity="0.7"/><circle cx="474.3" cy="512.0" r="1.0" fill="#4a3018" opacity="0.7"/><circle cx="432.3" cy="557.2" r="0.5" fill="#4a3018" opacity="0.7"/><circle cx="497.5" cy="495.9" r="1.1" fill="#2a2018" opacity="0.7"/><circle cx="545.6" cy="467.5" r="0.6" fill="#8a6038" opacity="0.7"/><circle cx="505.2" cy="558.1" r="1.0" fill="#f4e8d0" opacity="0.7"/><circle cx="446.4" cy="510.5" r="1.1" fill="#4a3018" opacity="0.7"/><circle cx="506.0" cy="545.1" r="1.4" fill="#2a2018" opacity="0.7"/><circle cx="474.8" cy="509.3" r="0.8" fill="#2a2018" opacity="0.7"/><circle cx="421.5" cy="577.9" r="1.2" fill="#2a2018" opacity="0.7"/><circle cx="440.4" cy="537.7" r="1.1" fill="#3a2814" opacity="0.7"/><circle cx="407.7" cy="556.2" r="1.3" fill="#4a3018" opacity="0.7"/><circle cx="399.6" cy="567.6" r="1.1" fill="#8a6038" opacity="0.7"/><circle cx="484.1" cy="563.5" r="1.4" fill="#ffffff" opacity="0.7"/><circle cx="389.2" cy="575.7" r="1.0" fill="#ffffff" opacity="0.7"/><circle cx="439.4" cy="557.6" r="0.8" fill="#2a2018" opacity="0.7"/><circle cx="446.3" cy="562.2" r="0.6" fill="#8a6038" opacity="0.7"/><circle cx="445.4" cy="590.4" r="1.0" fill="#8a6038" opacity="0.7"/><circle cx="491.5" cy="494.3" r="0.6" fill="#6a4828" opacity="0.7"/><circle cx="551.8" cy="516.4" r="1.0" fill="#ece0c4" opacity="0.7"/><circle cx="563.9" cy="497.0" r="0.6" fill="#6a4828" opacity="0.7"/><circle cx="531.3" cy="487.5" r="0.8" fill="#4a3018" opacity="0.7"/><circle cx="481.0" cy="523.6" r="0.8" fill="#3a2814" opacity="0.7"/><circle cx="467.4" cy="562.8" r="0.9" fill="#3a2814" opacity="0.7"/><circle cx="407.9" cy="521.3" r="1.1" fill="#ffffff" opacity="0.7"/><circle cx="485.6" cy="534.1" r="1.2" fill="#6a4828" opacity="0.7"/><circle cx="421.2" cy="565.4" r="0.9" fill="#8a6038" opacity="0.7"/><circle cx="531.0" cy="556.5" r="1.2" fill="#8a6038" opacity="0.7"/><circle cx="443.4" cy="546.2" r="1.0" fill="#4a3018" opacity="0.7"/><circle cx="543.4" cy="502.6" r="0.7" fill="#8a6038" opacity="0.7"/><circle cx="446.1" cy="527.9" r="1.3" fill="#ffffff" opacity="0.7"/><circle cx="432.4" cy="525.6" r="1.1" fill="#3a2814" opacity="0.7"/><circle cx="484.1" cy="516.9" r="1.4" fill="#3a2814" opacity="0.7"/><circle cx="481.7" cy="554.2" r="0.8" fill="#3a2814" opacity="0.7"/><circle cx="471.9" cy="549.7" r="1.4" fill="#ece0c4" opacity="0.7"/><circle cx="573.9" cy="472.4" r="0.8" fill="#ffffff" opacity="0.7"/><circle cx="502.1" cy="537.0" r="0.6" fill="#4a3018" opacity="0.7"/><circle cx="539.7" cy="527.6" r="0.7" fill="#ffffff" opacity="0.7"/><circle cx="403.0" cy="521.6" r="1.0" fill="#6a4828" opacity="0.7"/><circle cx="548.2" cy="522.3" r="1.3" fill="#4a3018" opacity="0.7"/><circle cx="452.2" cy="511.2" r="1.2" fill="#2a2018" opacity="0.7"/><circle cx="405.6" cy="586.7" r="0.9" fill="#f4e8d0" opacity="0.7"/><circle cx="571.4" cy="493.4" r="0.5" fill="#ffffff" opacity="0.7"/><circle cx="537.6" cy="524.8" r="1.4" fill="#6a4828" opacity="0.7"/><circle cx="420.3" cy="511.8" r="0.7" fill="#4a3018" opacity="0.7"/><circle cx="504.9" cy="540.6" r="0.8" fill="#f4e8d0" opacity="0.7"/><circle cx="508.5" cy="539.2" r="1.1" fill="#2a2018" opacity="0.7"/><circle cx="455.0" cy="498.5" r="1.2" fill="#2a2018" opacity="0.7"/><circle cx="573.2" cy="499.8" r="0.6" fill="#ece0c4" opacity="0.7"/><circle cx="433.6" cy="561.1" r="1.1" fill="#ffffff" opacity="0.7"/><circle cx="541.6" cy="481.9" r="0.7" fill="#8a6038" opacity="0.7"/><circle cx="400.0" cy="508.7" r="0.9" fill="#f4e8d0" opacity="0.7"/><circle cx="510.5" cy="510.2" r="0.7" fill="#3a2814" opacity="0.7"/><circle cx="483.4" cy="491.1" r="1.2" fill="#ece0c4" opacity="0.7"/><circle cx="516.3" cy="530.5" r="0.7" fill="#ffffff" opacity="0.7"/><circle cx="573.5" cy="479.3" r="1.3" fill="#6a4828" opacity="0.7"/><circle cx="404.5" cy="552.4" r="0.5" fill="#6a4828" opacity="0.7"/><circle cx="424.3" cy="494.2" r="1.2" fill="#3a2814" opacity="0.7"/><circle cx="503.9" cy="484.6" r="1.0" fill="#ece0c4" opacity="0.7"/><circle cx="489.1" cy="491.3" r="1.4" fill="#f4e8d0" opacity="0.7"/><circle cx="478.2" cy="562.1" r="1.1" fill="#3a2814" opacity="0.7"/><circle cx="484.1" cy="525.8" r="1.3" fill="#4a3018" opacity="0.7"/><circle cx="455.6" cy="500.0" r="0.6" fill="#ece0c4" opacity="0.7"/><circle cx="470.7" cy="559.3" r="1.1" fill="#ece0c4" opacity="0.7"/><circle cx="538.3" cy="490.7" r="1.2" fill="#6a4828" opacity="0.7"/><circle cx="481.4" cy="565.2" r="0.5" fill="#f4e8d0" opacity="0.7"/><circle cx="464.6" cy="561.9" r="1.4" fill="#ece0c4" opacity="0.7"/><circle cx="451.5" cy="513.9" r="1.3" fill="#ffffff" opacity="0.7"/><circle cx="585.3" cy="491.1" r="1.3" fill="#3a2814" opacity="0.7"/><circle cx="517.5" cy="543.8" r="0.7" fill="#f4e8d0" opacity="0.7"/><circle cx="513.4" cy="506.5" r="1.4" fill="#f4e8d0" opacity="0.7"/><circle cx="530.2" cy="467.8" r="0.8" fill="#8a6038" opacity="0.7"/><circle cx="492.4" cy="511.1" r="0.7" fill="#8a6038" opacity="0.7"/><circle cx="558.4" cy="506.2" r="1.2" fill="#f4e8d0" opacity="0.7"/><circle cx="486.8" cy="575.8" r="1.2" fill="#f4e8d0" opacity="0.7"/><circle cx="517.1" cy="531.5" r="0.5" fill="#4a3018" opacity="0.7"/><circle cx="513.5" cy="524.0" r="0.9" fill="#6a4828" opacity="0.7"/><circle cx="569.0" cy="471.8" r="0.8" fill="#6a4828" opacity="0.7"/><circle cx="531.5" cy="474.0" r="1.3" fill="#4a3018" opacity="0.7"/><circle cx="576.8" cy="534.4" r="0.7" fill="#6a4828" opacity="0.7"/><circle cx="411.9" cy="497.0" r="0.9" fill="#6a4828" opacity="0.7"/><circle cx="504.2" cy="478.2" r="0.7" fill="#ffffff" opacity="0.7"/><circle cx="449.9" cy="546.1" r="1.3" fill="#6a4828" opacity="0.7"/><circle cx="545.2" cy="542.9" r="1.3" fill="#ece0c4" opacity="0.7"/><circle cx="392.2" cy="606.2" r="1.2" fill="#ffffff" opacity="0.7"/><circle cx="539.8" cy="492.7" r="0.6" fill="#ece0c4" opacity="0.7"/><circle cx="425.8" cy="590.4" r="0.9" fill="#4a3018" opacity="0.7"/><circle cx="523.2" cy="477.0" r="0.6" fill="#f4e8d0" opacity="0.7"/><circle cx="513.4" cy="496.3" r="1.2" fill="#4a3018" opacity="0.7"/><circle cx="404.7" cy="512.3" r="0.5" fill="#f4e8d0" opacity="0.7"/><circle cx="564.1" cy="513.0" r="1.0" fill="#ffffff" opacity="0.7"/><circle cx="428.3" cy="509.2" r="1.2" fill="#2a2018" opacity="0.7"/><circle cx="395.9" cy="582.2" r="1.2" fill="#6a4828" opacity="0.7"/><circle cx="534.9" cy="483.4" r="1.2" fill="#8a6038" opacity="0.7"/><circle cx="502.0" cy="511.2" r="1.2" fill="#f4e8d0" opacity="0.7"/><circle cx="525.8" cy="490.9" r="1.3" fill="#4a3018" opacity="0.7"/><circle cx="558.1" cy="474.3" r="1.0" fill="#8a6038" opacity="0.7"/><circle cx="561.7" cy="536.3" r="0.6" fill="#ffffff" opacity="0.7"/><circle cx="515.9" cy="527.5" r="1.2" fill="#3a2814" opacity="0.7"/><circle cx="516.6" cy="561.6" r="0.6" fill="#f4e8d0" opacity="0.7"/><circle cx="440.6" cy="551.1" r="1.3" fill="#ece0c4" opacity="0.7"/><circle cx="531.7" cy="521.2" r="1.2" fill="#8a6038" opacity="0.7"/><circle cx="462.0" cy="552.2" r="1.2" fill="#2a2018" opacity="0.7"/><circle cx="390.0" cy="535.8" r="1.4" fill="#4a3018" opacity="0.7"/><circle cx="577.8" cy="533.7" r="1.0" fill="#2a2018" opacity="0.7"/><circle cx="487.4" cy="512.0" r="0.6" fill="#ece0c4" opacity="0.7"/><circle cx="473.7" cy="532.2" r="0.8" fill="#4a3018" opacity="0.7"/><circle cx="407.9" cy="502.0" r="0.9" fill="#ffffff" opacity="0.7"/><circle cx="504.7" cy="497.5" r="1.1" fill="#ece0c4" opacity="0.7"/><circle cx="397.9" cy="587.6" r="0.9" fill="#6a4828" opacity="0.7"/><circle cx="425.0" cy="514.5" r="0.8" fill="#2a2018" opacity="0.7"/><circle cx="572.5" cy="476.1" r="0.9" fill="#ece0c4" opacity="0.7"/><circle cx="563.0" cy="498.9" r="1.1" fill="#8a6038" opacity="0.7"/><circle cx="418.0" cy="576.8" r="1.1" fill="#3a2814" opacity="0.7"/><circle cx="405.3" cy="556.7" r="0.7" fill="#ffffff" opacity="0.7"/><circle cx="452.6" cy="507.3" r="1.3" fill="#2a2018" opacity="0.7"/><circle cx="562.9" cy="469.3" r="0.9" fill="#ffffff" opacity="0.7"/><circle cx="414.6" cy="518.5" r="1.2" fill="#3a2814" opacity="0.7"/><circle cx="550.2" cy="465.4" r="0.9" fill="#8a6038" opacity="0.7"/><circle cx="390.5" cy="605.2" r="0.6" fill="#3a2814" opacity="0.7"/><circle cx="515.3" cy="549.4" r="1.4" fill="#4a3018" opacity="0.7"/><circle cx="426.3" cy="551.4" r="1.1" fill="#3a2814" opacity="0.7"/><circle cx="441.0" cy="579.8" r="0.9" fill="#4a3018" opacity="0.7"/><circle cx="559.6" cy="513.8" r="0.7" fill="#6a4828" opacity="0.7"/><circle cx="562.6" cy="469.6" r="1.2" fill="#3a2814" opacity="0.7"/><circle cx="425.7" cy="508.4" r="1.0" fill="#4a3018" opacity="0.7"/><circle cx="466.4" cy="567.5" r="0.8" fill="#3a2814" opacity="0.7"/><circle cx="591.9" cy="490.6" r="1.3" fill="#8a6038" opacity="0.7"/><circle cx="475.7" cy="565.6" r="0.9" fill="#8a6038" opacity="0.7"/><circle cx="446.4" cy="491.6" r="1.0" fill="#ffffff" opacity="0.7"/><circle cx="476.8" cy="484.8" r="0.5" fill="#8a6038" opacity="0.7"/><circle cx="449.0" cy="543.0" r="1.2" fill="#2a2018" opacity="0.7"/><circle cx="448.2" cy="516.2" r="1.0" fill="#2a2018" opacity="0.7"/><circle cx="451.0" cy="557.7" r="0.9" fill="#3a2814" opacity="0.7"/><circle cx="391.5" cy="542.5" r="0.8" fill="#3a2814" opacity="0.7"/><circle cx="591.1" cy="501.2" r="1.3" fill="#ece0c4" opacity="0.7"/><circle cx="577.3" cy="474.9" r="1.3" fill="#2a2018" opacity="0.7"/><circle cx="414.3" cy="522.6" r="0.9" fill="#8a6038" opacity="0.7"/><circle cx="496.5" cy="512.2" r="1.1" fill="#6a4828" opacity="0.7"/><circle cx="419.8" cy="574.0" r="1.1" fill="#2a2018" opacity="0.7"/><circle cx="582.8" cy="480.7" r="1.1" fill="#8a6038" opacity="0.7"/><circle cx="389.7" cy="548.9" r="1.0" fill="#ece0c4" opacity="0.7"/><circle cx="475.8" cy="548.9" r="1.2" fill="#3a2814" opacity="0.7"/><circle cx="417.5" cy="494.4" r="1.0" fill="#ece0c4" opacity="0.7"/><circle cx="417.2" cy="569.1" r="1.1" fill="#2a2018" opacity="0.7"/><circle cx="447.7" cy="493.0" r="0.8" fill="#ece0c4" opacity="0.7"/><circle cx="466.3" cy="548.2" r="0.8" fill="#f4e8d0" opacity="0.7"/><circle cx="539.4" cy="471.2" r="0.7" fill="#8a6038" opacity="0.7"/><circle cx="485.1" cy="538.0" r="1.0" fill="#ffffff" opacity="0.7"/><circle cx="504.6" cy="532.5" r="0.7" fill="#ffffff" opacity="0.7"/><circle cx="524.3" cy="512.7" r="1.0" fill="#8a6038" opacity="0.7"/><circle cx="438.5" cy="546.3" r="0.8" fill="#ece0c4" opacity="0.7"/><circle cx="542.3" cy="494.6" r="0.5" fill="#6a4828" opacity="0.7"/><circle cx="497.5" cy="525.7" r="1.4" fill="#f4e8d0" opacity="0.7"/><circle cx="413.2" cy="520.5" r="0.7" fill="#2a2018" opacity="0.7"/><circle cx="404.3" cy="534.1" r="0.9" fill="#6a4828" opacity="0.7"/><circle cx="521.8" cy="489.6" r="0.6" fill="#ece0c4" opacity="0.7"/><circle cx="424.6" cy="577.7" r="1.2" fill="#f4e8d0" opacity="0.7"/><circle cx="500.0" cy="528.0" r="1.2" fill="#ece0c4" opacity="0.7"/><circle cx="432.3" cy="577.1" r="1.2" fill="#3a2814" opacity="0.7"/><circle cx="391.8" cy="593.9" r="1.0" fill="#3a2814" opacity="0.7"/><circle cx="523.9" cy="547.6" r="1.4" fill="#8a6038" opacity="0.7"/><circle cx="426.7" cy="515.1" r="1.2" fill="#4a3018" opacity="0.7"/><circle cx="556.2" cy="533.0" r="1.3" fill="#f4e8d0" opacity="0.7"/><circle cx="559.9" cy="533.8" r="1.3" fill="#6a4828" opacity="0.7"/><circle cx="502.6" cy="498.9" r="0.7" fill="#2a2018" opacity="0.7"/><circle cx="482.9" cy="573.5" r="0.6" fill="#2a2018" opacity="0.7"/><circle cx="581.7" cy="527.7" r="0.5" fill="#6a4828" opacity="0.7"/><circle cx="435.0" cy="550.7" r="0.5" fill="#2a2018" opacity="0.7"/><circle cx="407.5" cy="581.0" r="1.3" fill="#ece0c4" opacity="0.7"/><circle cx="458.5" cy="556.8" r="0.9" fill="#ffffff" opacity="0.7"/><circle cx="526.5" cy="491.9" r="0.7" fill="#ece0c4" opacity="0.7"/><circle cx="410.1" cy="596.0" r="0.9" fill="#ece0c4" opacity="0.7"/><circle cx="552.8" cy="548.4" r="1.3" fill="#4a3018" opacity="0.7"/><circle cx="425.3" cy="561.0" r="1.1" fill="#ece0c4" opacity="0.7"/><circle cx="519.3" cy="478.4" r="1.0" fill="#ffffff" opacity="0.7"/><circle cx="601.2" cy="495.5" r="1.0" fill="#2a2018" opacity="0.7"/><circle cx="549.2" cy="494.7" r="0.7" fill="#4a3018" opacity="0.7"/><circle cx="584.2" cy="491.0" r="0.5" fill="#4a3018" opacity="0.7"/><circle cx="589.1" cy="494.0" r="1.3" fill="#4a3018" opacity="0.7"/><circle cx="392.9" cy="577.4" r="1.2" fill="#f4e8d0" opacity="0.7"/><circle cx="578.7" cy="475.0" r="1.2" fill="#6a4828" opacity="0.7"/><circle cx="424.0" cy="539.4" r="1.0" fill="#f4e8d0" opacity="0.7"/><circle cx="594.7" cy="519.2" r="0.6" fill="#4a3018" opacity="0.7"/><circle cx="395.4" cy="560.5" r="1.0" fill="#f4e8d0" opacity="0.7"/><circle cx="522.3" cy="552.2" r="1.1" fill="#f4e8d0" opacity="0.7"/><circle cx="531.2" cy="555.3" r="0.9" fill="#ffffff" opacity="0.7"/><circle cx="390.6" cy="575.5" r="0.7" fill="#4a3018" opacity="0.7"/><circle cx="433.9" cy="569.8" r="1.1" fill="#ece0c4" opacity="0.7"/><circle cx="407.6" cy="540.5" r="0.6" fill="#f4e8d0" opacity="0.7"/><circle cx="447.9" cy="507.9" r="0.6" fill="#3a2814" opacity="0.7"/><circle cx="537.9" cy="552.8" r="0.9" fill="#2a2018" opacity="0.7"/><circle cx="476.6" cy="554.7" r="1.3" fill="#ece0c4" opacity="0.7"/><circle cx="543.1" cy="464.7" r="1.3" fill="#6a4828" opacity="0.7"/><circle cx="484.0" cy="569.5" r="1.2" fill="#3a2814" opacity="0.7"/><circle cx="471.2" cy="485.1" r="1.4" fill="#6a4828" opacity="0.7"/><circle cx="448.0" cy="498.7" r="1.0" fill="#2a2018" opacity="0.7"/><circle cx="462.3" cy="544.3" r="1.3" fill="#8a6038" opacity="0.7"/><circle cx="459.7" cy="579.4" r="1.3" fill="#ece0c4" opacity="0.7"/><circle cx="559.8" cy="542.5" r="0.5" fill="#f4e8d0" opacity="0.7"/><circle cx="572.1" cy="525.9" r="0.8" fill="#8a6038" opacity="0.7"/><circle cx="423.6" cy="542.3" r="1.3" fill="#ece0c4" opacity="0.7"/><circle cx="391.9" cy="500.3" r="1.4" fill="#f4e8d0" opacity="0.7"/><circle cx="426.9" cy="527.9" r="1.1" fill="#6a4828" opacity="0.7"/><circle cx="442.4" cy="499.9" r="0.6" fill="#4a3018" opacity="0.7"/><circle cx="521.9" cy="561.7" r="1.1" fill="#6a4828" opacity="0.7"/><circle cx="413.3" cy="536.5" r="1.3" fill="#3a2814" opacity="0.7"/><circle cx="443.8" cy="521.2" r="0.9" fill="#6a4828" opacity="0.7"/><circle cx="545.6" cy="474.7" r="0.8" fill="#ffffff" opacity="0.7"/><circle cx="567.2" cy="495.1" r="1.2" fill="#ece0c4" opacity="0.7"/><circle cx="533.2" cy="503.0" r="1.3" fill="#4a3018" opacity="0.7"/><circle cx="456.1" cy="500.8" r="0.6" fill="#4a3018" opacity="0.7"/><circle cx="471.3" cy="561.1" r="0.6" fill="#ece0c4" opacity="0.7"/><circle cx="452.6" cy="501.6" r="1.3" fill="#6a4828" opacity="0.7"/><circle cx="465.4" cy="544.0" r="0.6" fill="#6a4828" opacity="0.7"/><circle cx="558.4" cy="499.0" r="0.6" fill="#8a6038" opacity="0.7"/><circle cx="584.5" cy="485.7" r="1.3" fill="#2a2018" opacity="0.7"/><circle cx="395.5" cy="560.5" r="1.2" fill="#ece0c4" opacity="0.7"/><circle cx="572.4" cy="497.3" r="0.7" fill="#ffffff" opacity="0.7"/><circle cx="470.1" cy="517.2" r="0.5" fill="#3a2814" opacity="0.7"/><circle cx="487.9" cy="570.3" r="0.9" fill="#f4e8d0" opacity="0.7"/><circle cx="584.6" cy="526.0" r="0.6" fill="#4a3018" opacity="0.7"/><circle cx="403.6" cy="516.0" r="0.7" fill="#ffffff" opacity="0.7"/><circle cx="498.5" cy="535.0" r="1.0" fill="#ece0c4" opacity="0.7"/><circle cx="573.5" cy="477.1" r="1.0" fill="#2a2018" opacity="0.7"/><circle cx="574.9" cy="492.9" r="0.9" fill="#f4e8d0" opacity="0.7"/><circle cx="557.8" cy="480.4" r="1.1" fill="#ffffff" opacity="0.7"/><circle cx="410.1" cy="503.5" r="0.6" fill="#8a6038" opacity="0.7"/><circle cx="540.2" cy="533.6" r="0.7" fill="#3a2814" opacity="0.7"/><circle cx="391.3" cy="561.2" r="1.1" fill="#4a3018" opacity="0.7"/><circle cx="531.9" cy="481.6" r="0.6" fill="#8a6038" opacity="0.7"/><circle cx="428.1" cy="495.2" r="1.3" fill="#ffffff" opacity="0.7"/><circle cx="396.7" cy="528.0" r="1.3" fill="#6a4828" opacity="0.7"/><circle cx="454.5" cy="508.7" r="1.3" fill="#ece0c4" opacity="0.7"/><circle cx="475.4" cy="565.3" r="0.8" fill="#4a3018" opacity="0.7"/><circle cx="430.4" cy="532.9" r="1.4" fill="#3a2814" opacity="0.7"/><circle cx="487.2" cy="495.1" r="0.5" fill="#8a6038" opacity="0.7"/><circle cx="427.2" cy="524.0" r="1.0" fill="#4a3018" opacity="0.7"/><circle cx="554.6" cy="497.0" r="0.6" fill="#4a3018" opacity="0.7"/><circle cx="491.1" cy="544.9" r="0.6" fill="#2a2018" opacity="0.7"/><circle cx="595.5" cy="483.1" r="1.4" fill="#6a4828" opacity="0.7"/><circle cx="418.1" cy="509.8" r="0.7" fill="#4a3018" opacity="0.7"/><circle cx="443.4" cy="548.4" r="1.3" fill="#ece0c4" opacity="0.7"/><circle cx="594.7" cy="501.7" r="0.6" fill="#2a2018" opacity="0.7"/><circle cx="404.2" cy="576.8" r="1.3" fill="#6a4828" opacity="0.7"/><circle cx="479.3" cy="542.1" r="1.2" fill="#3a2814" opacity="0.7"/><circle cx="529.5" cy="539.5" r="0.9" fill="#f4e8d0" opacity="0.7"/><circle cx="496.4" cy="542.2" r="1.3" fill="#8a6038" opacity="0.7"/><circle cx="595.9" cy="489.9" r="1.0" fill="#f4e8d0" opacity="0.7"/><circle cx="443.5" cy="519.2" r="1.1" fill="#3a2814" opacity="0.7"/><circle cx="444.3" cy="587.4" r="1.1" fill="#4a3018" opacity="0.7"/><circle cx="490.4" cy="564.2" r="0.9" fill="#4a3018" opacity="0.7"/><circle cx="462.1" cy="577.9" r="0.9" fill="#6a4828" opacity="0.7"/><circle cx="475.2" cy="480.8" r="0.8" fill="#ece0c4" opacity="0.7"/><circle cx="541.3" cy="518.9" r="1.2" fill="#ffffff" opacity="0.7"/><circle cx="416.4" cy="494.5" r="1.3" fill="#ece0c4" opacity="0.7"/><circle cx="413.3" cy="539.0" r="1.1" fill="#2a2018" opacity="0.7"/><circle cx="528.0" cy="532.8" r="1.3" fill="#ffffff" opacity="0.7"/><circle cx="513.0" cy="515.1" r="0.8" fill="#2a2018" opacity="0.7"/><circle cx="524.3" cy="505.3" r="1.1" fill="#ece0c4" opacity="0.7"/><circle cx="431.2" cy="578.8" r="1.1" fill="#3a2814" opacity="0.7"/><circle cx="486.8" cy="563.2" r="0.7" fill="#4a3018" opacity="0.7"/><circle cx="392.2" cy="542.9" r="0.5" fill="#3a2814" opacity="0.7"/><circle cx="407.4" cy="498.6" r="0.7" fill="#6a4828" opacity="0.7"/><circle cx="446.0" cy="570.2" r="0.5" fill="#ece0c4" opacity="0.7"/><circle cx="597.5" cy="483.0" r="0.6" fill="#8a6038" opacity="0.7"/><circle cx="464.0" cy="505.2" r="1.3" fill="#ffffff" opacity="0.7"/><circle cx="445.8" cy="501.2" r="1.1" fill="#f4e8d0" opacity="0.7"/><circle cx="538.8" cy="500.8" r="0.8" fill="#8a6038" opacity="0.7"/><circle cx="494.7" cy="489.2" r="1.2" fill="#4a3018" opacity="0.7"/><circle cx="569.4" cy="525.5" r="1.1" fill="#3a2814" opacity="0.7"/><circle cx="438.3" cy="583.6" r="0.6" fill="#ffffff" opacity="0.7"/><circle cx="515.0" cy="489.7" r="1.2" fill="#ffffff" opacity="0.7"/><circle cx="559.1" cy="495.8" r="1.2" fill="#f4e8d0" opacity="0.7"/><circle cx="490.5" cy="527.5" r="0.7" fill="#4a3018" opacity="0.7"/><circle cx="514.2" cy="476.7" r="0.7" fill="#ffffff" opacity="0.7"/><circle cx="444.6" cy="525.6" r="1.2" fill="#8a6038" opacity="0.7"/><circle cx="395.6" cy="572.3" r="1.0" fill="#ece0c4" opacity="0.7"/><circle cx="434.5" cy="571.3" r="1.1" fill="#ffffff" opacity="0.7"/><circle cx="582.9" cy="491.7" r="1.4" fill="#3a2814" opacity="0.7"/><circle cx="582.2" cy="480.3" r="0.7" fill="#4a3018" opacity="0.7"/><circle cx="559.8" cy="508.0" r="1.0" fill="#8a6038" opacity="0.7"/><circle cx="454.9" cy="580.1" r="0.6" fill="#8a6038" opacity="0.7"/><circle cx="399.6" cy="539.6" r="0.7" fill="#6a4828" opacity="0.7"/><circle cx="524.3" cy="498.0" r="0.7" fill="#4a3018" opacity="0.7"/><circle cx="414.7" cy="538.6" r="1.1" fill="#8a6038" opacity="0.7"/><circle cx="491.4" cy="508.2" r="0.6" fill="#f4e8d0" opacity="0.7"/><circle cx="404.1" cy="520.0" r="0.6" fill="#ffffff" opacity="0.7"/><circle cx="561.8" cy="539.6" r="0.8" fill="#ffffff" opacity="0.7"/><circle cx="491.5" cy="570.4" r="1.0" fill="#8a6038" opacity="0.7"/><circle cx="554.4" cy="473.6" r="0.6" fill="#3a2814" opacity="0.7"/><circle cx="531.0" cy="512.8" r="0.6" fill="#f4e8d0" opacity="0.7"/><circle cx="547.2" cy="464.9" r="1.0" fill="#6a4828" opacity="0.7"/><circle cx="539.5" cy="509.0" r="0.7" fill="#2a2018" opacity="0.7"/><circle cx="426.3" cy="578.6" r="1.1" fill="#2a2018" opacity="0.7"/><circle cx="487.5" cy="545.5" r="0.7" fill="#f4e8d0" opacity="0.7"/><circle cx="583.4" cy="533.3" r="1.0" fill="#6a4828" opacity="0.7"/><circle cx="451.1" cy="532.1" r="1.2" fill="#ece0c4" opacity="0.7"/><circle cx="595.0" cy="476.6" r="1.2" fill="#8a6038" opacity="0.7"/><circle cx="394.9" cy="539.5" r="1.4" fill="#6a4828" opacity="0.7"/><circle cx="521.3" cy="508.6" r="1.1" fill="#8a6038" opacity="0.7"/><circle cx="530.8" cy="468.7" r="1.3" fill="#4a3018" opacity="0.7"/><circle cx="565.1" cy="501.2" r="0.8" fill="#8a6038" opacity="0.7"/><circle cx="521.8" cy="521.1" r="0.6" fill="#3a2814" opacity="0.7"/><circle cx="477.3" cy="558.6" r="1.2" fill="#ece0c4" opacity="0.7"/><circle cx="527.5" cy="468.1" r="1.2" fill="#6a4828" opacity="0.7"/><circle cx="563.8" cy="499.2" r="0.8" fill="#8a6038" opacity="0.7"/><circle cx="569.5" cy="480.7" r="1.1" fill="#8a6038" opacity="0.7"/><circle cx="400.8" cy="598.9" r="1.3" fill="#6a4828" opacity="0.7"/><circle cx="578.0" cy="481.6" r="1.2" fill="#4a3018" opacity="0.7"/><circle cx="592.4" cy="532.9" r="1.2" fill="#ffffff" opacity="0.7"/><circle cx="576.0" cy="493.2" r="0.8" fill="#8a6038" opacity="0.7"/><circle cx="394.5" cy="517.4" r="0.9" fill="#f4e8d0" opacity="0.7"/><circle cx="400.3" cy="593.3" r="0.8" fill="#2a2018" opacity="0.7"/><circle cx="491.5" cy="518.6" r="0.8" fill="#ffffff" opacity="0.7"/><circle cx="547.9" cy="514.6" r="1.0" fill="#f4e8d0" opacity="0.7"/><circle cx="403.7" cy="529.2" r="1.3" fill="#4a3018" opacity="0.7"/><circle cx="532.1" cy="492.2" r="1.0" fill="#8a6038" opacity="0.7"/><circle cx="511.2" cy="531.5" r="0.5" fill="#2a2018" opacity="0.7"/><circle cx="428.5" cy="505.1" r="0.6" fill="#8a6038" opacity="0.7"/><circle cx="401.4" cy="516.8" r="0.6" fill="#2a2018" opacity="0.7"/><circle cx="525.9" cy="471.9" r="0.7" fill="#2a2018" opacity="0.7"/><circle cx="453.9" cy="511.0" r="0.9" fill="#6a4828" opacity="0.7"/><circle cx="582.5" cy="485.4" r="1.3" fill="#4a3018" opacity="0.7"/><circle cx="575.7" cy="516.1" r="0.7" fill="#4a3018" opacity="0.7"/><circle cx="394.0" cy="537.9" r="1.0" fill="#ece0c4" opacity="0.7"/><circle cx="419.9" cy="557.8" r="0.9" fill="#4a3018" opacity="0.7"/><circle cx="518.5" cy="500.2" r="0.7" fill="#3a2814" opacity="0.7"/><circle cx="435.5" cy="557.4" r="0.6" fill="#4a3018" opacity="0.7"/><circle cx="390.2" cy="512.7" r="1.2" fill="#6a4828" opacity="0.7"/><circle cx="440.0" cy="499.6" r="0.7" fill="#6a4828" opacity="0.7"/><circle cx="426.6" cy="595.2" r="1.2" fill="#f4e8d0" opacity="0.7"/><circle cx="447.6" cy="589.9" r="0.9" fill="#4a3018" opacity="0.7"/><circle cx="389.4" cy="594.7" r="1.3" fill="#f4e8d0" opacity="0.7"/><circle cx="509.3" cy="524.3" r="0.9" fill="#8a6038" opacity="0.7"/><circle cx="461.3" cy="578.8" r="1.4" fill="#ece0c4" opacity="0.7"/><circle cx="465.7" cy="527.6" r="0.6" fill="#3a2814" opacity="0.7"/><circle cx="430.5" cy="508.9" r="0.7" fill="#3a2814" opacity="0.7"/><circle cx="492.1" cy="528.2" r="0.9" fill="#ffffff" opacity="0.7"/><circle cx="448.6" cy="540.4" r="1.0" fill="#ffffff" opacity="0.7"/><circle cx="404.8" cy="568.7" r="0.9" fill="#f4e8d0" opacity="0.7"/><circle cx="465.1" cy="525.9" r="1.1" fill="#8a6038" opacity="0.7"/><circle cx="557.7" cy="533.9" r="1.4" fill="#2a2018" opacity="0.7"/><circle cx="522.2" cy="484.3" r="1.4" fill="#4a3018" opacity="0.7"/><circle cx="420.2" cy="516.7" r="1.2" fill="#2a2018" opacity="0.7"/><circle cx="515.9" cy="565.0" r="1.2" fill="#8a6038" opacity="0.7"/><circle cx="422.6" cy="545.5" r="0.8" fill="#6a4828" opacity="0.7"/><circle cx="418.2" cy="600.2" r="1.1" fill="#4a3018" opacity="0.7"/><circle cx="562.4" cy="528.3" r="0.8" fill="#3a2814" opacity="0.7"/><circle cx="581.5" cy="514.2" r="1.1" fill="#8a6038" opacity="0.7"/><circle cx="491.5" cy="511.6" r="1.0" fill="#2a2018" opacity="0.7"/><circle cx="392.6" cy="584.0" r="0.8" fill="#f4e8d0" opacity="0.7"/><circle cx="448.3" cy="511.5" r="0.6" fill="#ffffff" opacity="0.7"/><circle cx="562.2" cy="482.8" r="0.7" fill="#ece0c4" opacity="0.7"/><circle cx="482.9" cy="478.9" r="1.4" fill="#f4e8d0" opacity="0.7"/><circle cx="408.3" cy="603.4" r="1.3" fill="#2a2018" opacity="0.7"/><circle cx="397.6" cy="537.0" r="0.9" fill="#2a2018" opacity="0.7"/><circle cx="459.5" cy="567.6" r="0.6" fill="#6a4828" opacity="0.7"/><circle cx="520.0" cy="564.2" r="0.8" fill="#ece0c4" opacity="0.7"/><circle cx="599.5" cy="527.3" r="0.9" fill="#2a2018" opacity="0.7"/><circle cx="484.9" cy="534.9" r="1.4" fill="#4a3018" opacity="0.7"/><circle cx="540.8" cy="487.1" r="1.3" fill="#6a4828" opacity="0.7"/><ellipse cx="520" cy="540" rx="50" ry="25" fill="#dcc090" opacity="0.35" filter="url(#bl8)"/><path d="M470 500Q500 490 520 505" stroke="#6a5030" stroke-width="3" opacity="0.4" fill="none" filter="url(#bl2)"/><path d="M389 614L600 537" stroke="#4a3a28" stroke-width="2.5" fill="none"/><ellipse cx="459" cy="540" rx="48" ry="23" transform="rotate(-8 459 540)" fill="#8a7a60"/><ellipse cx="459" cy="540" rx="46" ry="21.5" transform="rotate(-8 459 540)" fill="url(#sink)"/><ellipse cx="470" cy="550" rx="2.5" ry="2" fill="#d0d8f0" opacity="0.9"/><ellipse cx="480" cy="525" rx="1.5" ry="6" fill="#8090c0" opacity="0.6"/><rect x="419" y="504" width="7" height="19" rx="2" fill="#aaa89e"/><rect x="441" y="502" width="7" height="17" rx="2" fill="#9a988e"/><rect x="457" y="495" width="8" height="12" rx="2" fill="#aaa89e"/><rect x="543" y="456" width="36" height="53" rx="6" fill="#d8a838"/><ellipse cx="561" cy="463" rx="17" ry="6.5" fill="#ecdca8"/><rect x="547" y="480" width="9" height="27" fill="#e8e0d0" opacity="0.8"/><polygon points="616,163 667,163 667,713 599,713 603,530 605,470" fill="url(#door)"/><rect x="663" y="163" width="4" height="550" fill="#40140a" opacity="0.5"/><path d="M607 455Q618 448 619 470L618 518Q610 520 607 508Z" fill="#1a1010"/><circle cx="610" cy="478" r="3" fill="#b0a080"/><polygon points="389,614 600,537 599,713 389,713" fill="url(#cab)"/><path d="M468 582V713 M550 550V713" stroke="#0a1028" stroke-width="3" fill="none"/><polygon points="389,650 458,621 458,642 389,671" stroke="#a4aabf" stroke-width="3.2" fill="none" stroke-linejoin="round"/><path d="M390 705L458 670V713" stroke="#a4aabf" stroke-width="3.2" fill="none" stroke-linejoin="round"/><polygon points="485,605 539,582 539,601 487,626" stroke="#a4aabf" stroke-width="3.2" fill="none" stroke-linejoin="round"/><path d="M489 713L487 655L539 626V691" stroke="#a4aabf" stroke-width="3.2" fill="none" stroke-linejoin="round"/><polygon points="564,568 599,553 599,566 564,587" stroke="#a4aabf" stroke-width="3.2" fill="none" stroke-linejoin="round"/><path d="M564 665V610L598 593" stroke="#a4aabf" stroke-width="3.2" fill="none" stroke-linejoin="round"/><circle cx="424" cy="642" r="2" fill="#c8c0b0"/><circle cx="512" cy="606" r="2" fill="#c8c0b0"/><circle cx="585" cy="566" r="2" fill="#c8c0b0"/><circle cx="463" cy="660" r="2" fill="#c8c0b0"/><circle cx="478" cy="655" r="2" fill="#c8c0b0"/><circle cx="555" cy="602" r="2" fill="#c8c0b0"/><polygon points="535,700 598,690 598,713 535,713" fill="#5a5048"/><text x="555" y="692" font-family="Liberation Sans" font-weight="700" font-size="40" fill="#e6d2d2" textLength="22" lengthAdjust="spacingAndGlyphs">S</text><text x="573" y="690" font-family="Liberation Sans" font-weight="700" font-size="40" fill="#c0282e" textLength="22" lengthAdjust="spacingAndGlyphs">P</text><path d="M557 695H662" stroke="#b02028" stroke-width="1" opacity="0.4"/></g></svg><svg style="position:absolute;left:0;top:617px" width="945" height="48" viewBox="0 0 945 48"><defs><filter id="tb"><feGaussianBlur stdDeviation="1"/></filter><radialGradient id="cl" cx="0.5" cy="0" r="0.6"><stop offset="0" stop-color="#fff" stop-opacity="0.75"/><stop offset="1" stop-color="#fff" stop-opacity="0"/></radialGradient></defs><rect x="0" y="0" width="945" height="48" fill="#080808"/><g filter="url(#tb)"><rect x="0.0" y="0.0" width="18" height="47" fill="#bdb8b0" opacity="1"/><rect x="3.0" y="8.0" width="12" height="16" fill="#e8e8ec" opacity="1"/><rect x="0.0" y="26.0" width="18" height="21" fill="#5a4a3a" opacity="1"/><rect x="1.0" y="34.0" width="10" height="8" fill="#e0e0e0" opacity="1"/><rect x="0.0" y="0.0" width="4" height="30" fill="#6a5040" opacity="1"/><rect x="19.0" y="0.0" width="49" height="47" fill="#c8c8c0" opacity="1"/><rect x="19.0" y="0.0" width="13" height="19" fill="#3c6a4a" opacity="1"/><rect x="19.0" y="24.0" width="36" height="23" fill="#dcdcd6" opacity="1"/><rect x="25.0" y="30.0" width="3" height="17" fill="#707070" opacity="1"/><rect x="38.0" y="29.0" width="3" height="18" fill="#707070" opacity="1"/><rect x="59.0" y="0.0" width="9" height="6" fill="#303030" opacity="1"/><rect x="49.0" y="31.0" width="14" height="16" fill="#8a9098" opacity="1"/><rect x="69.0" y="0.0" width="48" height="47" fill="#d2d2cc" opacity="1"/><rect x="74.0" y="0.0" width="14" height="4" fill="#2a2a2a" opacity="1"/><rect x="93.0" y="4.0" width="2" height="35" fill="#9a9a98" opacity="1"/><rect x="103.0" y="36.0" width="14" height="11" fill="#eeeeea" opacity="1"/><rect x="69.0" y="0.0" width="2" height="47" fill="#b0b0a8" opacity="1"/><rect x="118.0" y="0.0" width="48" height="47" fill="#c4c0b8" opacity="1"/><rect x="123.0" y="0.0" width="4" height="24" fill="#3a3630" opacity="1"/><rect x="126.0" y="12.0" width="8" height="16" fill="#ecece8" opacity="1"/><rect x="153.0" y="10.0" width="7" height="32" fill="#26262a" opacity="1"/><rect x="118.0" y="25.0" width="27" height="10" fill="#80786a" opacity="1"/><rect x="122.0" y="34.0" width="24" height="10" fill="#e4e4e0" opacity="1"/><rect x="118.0" y="42.0" width="48" height="5" fill="#8a8680" opacity="1"/><rect x="168.0" y="0.0" width="48" height="47" fill="#1e4a8e" opacity="1"/><rect x="171.0" y="2.0" width="1" height="35" fill="#5a80b8" opacity="0.6"/><rect x="183.0" y="2.0" width="1" height="35" fill="#5a80b8" opacity="0.6"/><rect x="195.0" y="2.0" width="1" height="35" fill="#5a80b8" opacity="0.6"/><rect x="207.0" y="2.0" width="1" height="35" fill="#5a80b8" opacity="0.6"/><rect x="168.0" y="34.0" width="30" height="13" fill="#d0d0cc" opacity="1"/><ellipse cx="184.0" cy="43.0" rx="9" ry="4" fill="#3878c8" opacity="1"/><rect x="217.0" y="0.0" width="48" height="47" fill="#dedad2" opacity="1"/><rect x="220.0" y="7.0" width="6" height="37" fill="#7a3a20" opacity="1"/><rect x="235.0" y="13.0" width="9" height="19" fill="#7a3a22" opacity="1"/><rect x="253.0" y="10.0" width="3" height="20" fill="#6a3a20" opacity="1"/><polygon points="217.0,47.0 227.0,38.0 245.0,31.0 265.0,31.0 265.0,47.0" fill="#4a2418" opacity="1"/><rect x="267.0" y="0.0" width="48" height="47" fill="#d8d6d0" opacity="1"/><rect x="280.0" y="10.0" width="7" height="29" fill="#2a2018" opacity="1"/><rect x="292.0" y="16.0" width="11" height="31" fill="#3a2820" opacity="1"/><rect x="290.0" y="0.0" width="10" height="14" fill="#e8e8e4" opacity="1"/><rect x="267.0" y="38.0" width="26" height="9" fill="#3a2a20" opacity="1"/><rect x="305.0" y="0.0" width="10" height="47" fill="#e4e4e0" opacity="1"/><rect x="316.0" y="0.0" width="48" height="47" fill="#d4d0c8" opacity="1"/><rect x="337.0" y="16.0" width="18" height="14" fill="#3a3840" opacity="1"/><rect x="357.0" y="15.0" width="5" height="10" fill="#4a4a50" opacity="1"/><polygon points="316.0,47.0 316.0,34.0 340.0,29.0 364.0,32.0 364.0,47.0" fill="#4a2a20" opacity="1"/><rect x="318.0" y="30.0" width="10" height="14" fill="#8a7058" opacity="1"/><rect x="366.0" y="0.0" width="48" height="47" fill="#dcd8d0" opacity="1"/><rect x="367.0" y="13.0" width="4" height="18" fill="#2a2a30" opacity="1"/><rect x="399.0" y="12.0" width="10" height="32" fill="#6a3a20" opacity="1"/><rect x="366.0" y="38.0" width="48" height="9" fill="#3a2418" opacity="1"/><rect x="366.0" y="0.0" width="48" height="5" fill="#c8c4bc" opacity="1"/><rect x="415.0" y="0.0" width="49" height="47" fill="#dcd8d0" opacity="1"/><rect x="420.0" y="5.0" width="7" height="38" fill="#3a3a42" opacity="1"/><rect x="416.0" y="4.0" width="3" height="40" fill="#c0c0bc" opacity="1"/><rect x="451.0" y="3.0" width="12" height="44" fill="#7a3e20" opacity="1"/><rect x="415.0" y="40.0" width="36" height="7" fill="#3a2418" opacity="1"/><rect x="455.0" y="8.0" width="4" height="6" fill="#d0a080" opacity="1"/><rect x="465.0" y="0.0" width="48" height="47" fill="#c8c4bc" opacity="1"/><rect x="465.0" y="0.0" width="9" height="47" fill="#3a2018" opacity="1"/><rect x="474.0" y="0.0" width="17" height="22" fill="#e0e0dc" opacity="1"/><rect x="475.0" y="22.0" width="15" height="25" fill="#5a2a20" opacity="1"/><rect x="476.0" y="38.0" width="10" height="9" fill="#d8d8d8" opacity="1"/><rect x="491.0" y="0.0" width="22" height="12" fill="#cfd0d0" opacity="1"/><rect x="498.0" y="12.0" width="8" height="17" fill="#eef2f4" opacity="1"/><rect x="505.0" y="12.0" width="8" height="35" fill="#2a2a2a" opacity="1"/><rect x="514.0" y="0.0" width="48" height="47" fill="#e2ded6" opacity="1"/><rect x="520.0" y="14.0" width="16" height="18" fill="#161618" opacity="1"/><rect x="514.0" y="38.0" width="48" height="9" fill="#3a2418" opacity="1"/><rect x="551.0" y="0.0" width="11" height="47" fill="#d0ccc4" opacity="1"/><rect x="564.0" y="0.0" width="48" height="47" fill="#cac6be" opacity="1"/><rect x="564.0" y="0.0" width="20" height="20" fill="#8a7a6a" opacity="1"/><rect x="585.0" y="0.0" width="15" height="14" fill="#f0f0f0" opacity="1"/><polygon points="564.0,47.0 564.0,26.0 585.0,19.0 595.0,22.0 595.0,47.0" fill="#2a2e38" opacity="1"/><rect x="585.0" y="34.0" width="20" height="13" fill="#e8e4dc" opacity="1"/><rect x="600.0" y="6.0" width="10" height="35" fill="#b0b4b0" opacity="1"/><rect x="613.0" y="0.0" width="49" height="47" fill="#e6e2cc" opacity="1"/><rect x="619.0" y="4.0" width="10" height="43" fill="#5a2a1a" opacity="1"/><rect x="621.0" y="8.0" width="3" height="12" fill="#d8c8b0" opacity="1"/><rect x="646.0" y="7.0" width="8" height="34" fill="#3a2418" opacity="1"/><rect x="613.0" y="41.0" width="49" height="6" fill="#2a1810" opacity="1"/><rect x="663.0" y="0.0" width="48" height="47" fill="#e0e0dc" opacity="1"/><rect x="693.0" y="12.0" width="16" height="19" fill="#161618" opacity="1"/><polygon points="675.0,47.0 697.0,36.0 711.0,42.0 711.0,47.0" fill="#2a1a12" opacity="1"/><rect x="713.0" y="0.0" width="48" height="47" fill="#2c2a2a" opacity="1"/><rect x="716.0" y="3.0" width="16" height="30" fill="#4a3830" opacity="1"/><rect x="735.0" y="3.0" width="18" height="28" fill="#1a1a20" opacity="1"/><rect x="749.0" y="3.0" width="9" height="40" fill="#8a3a22" opacity="1"/><polygon points="716.0,34.0 735.0,24.0 751.0,28.0 751.0,44.0 716.0,44.0" fill="#c49c6c" opacity="1"/><ellipse cx="729.0" cy="40.0" rx="9" ry="4" fill="#1e2a4a" opacity="1"/><rect x="762.0" y="0.0" width="48" height="47" fill="#d4d4d0" opacity="1"/><rect x="800.0" y="0.0" width="10" height="47" fill="#5a2818" opacity="1"/><polygon points="767.0,47.0 771.0,32.0 795.0,29.0 797.0,47.0" fill="#6a6660" opacity="1"/><rect x="780.0" y="8.0" width="4" height="10" fill="#b8b8b4" opacity="1"/><rect x="812.0" y="0.0" width="47" height="47" fill="#d0d0cc" opacity="1"/><rect x="816.0" y="11.0" width="8" height="36" fill="#6a3a1e" opacity="1"/><rect x="823.0" y="12.0" width="12" height="22" fill="#e8e8e4" opacity="1"/><rect x="837.0" y="13.0" width="5" height="26" fill="#3a2418" opacity="1"/><rect x="845.0" y="0.0" width="14" height="22" fill="#e8e4d8" opacity="1"/><rect x="841.0" y="31.0" width="18" height="16" fill="#e0e0dc" opacity="1"/><rect x="812.0" y="0.0" width="47" height="6" fill="#b8b8b4" opacity="1"/><rect x="861.0" y="0.0" width="47" height="47" fill="#d8d4cc" opacity="1"/><rect x="864.0" y="12.0" width="8" height="20" fill="#5a5a60" opacity="1"/><rect x="895.0" y="11.0" width="8" height="28" fill="#6a3a20" opacity="1"/><polygon points="861.0,47.0 861.0,32.0 885.0,30.0 908.0,41.0 908.0,47.0" fill="#2a1810" opacity="1"/><rect x="869.0" y="36.0" width="6" height="8" fill="#e8d8d8" opacity="1"/><rect x="910.0" y="0.0" width="8" height="47" fill="#e0b830" opacity="1"/><rect x="918.0" y="0.0" width="3" height="47" fill="#2a1a10" opacity="1"/><rect x="921.0" y="0.0" width="24" height="47" fill="#6a2a18" opacity="1"/><rect x="925.0" y="16.0" width="10" height="18" fill="#1a1a22" opacity="1"/><rect x="926.0" y="31.0" width="6" height="10" fill="#c03040" opacity="1"/><rect x="23" y="0" width="40" height="18" fill="url(#cl)"/><rect x="73" y="0" width="40" height="18" fill="url(#cl)"/><rect x="122" y="0" width="40" height="18" fill="url(#cl)"/><rect x="221" y="0" width="40" height="18" fill="url(#cl)"/><rect x="271" y="0" width="40" height="18" fill="url(#cl)"/><rect x="320" y="0" width="40" height="18" fill="url(#cl)"/><rect x="370" y="0" width="40" height="18" fill="url(#cl)"/><rect x="419" y="0" width="40" height="18" fill="url(#cl)"/><rect x="518" y="0" width="40" height="18" fill="url(#cl)"/><rect x="667" y="0" width="40" height="18" fill="url(#cl)"/><rect x="766" y="0" width="40" height="18" fill="url(#cl)"/><rect x="816" y="0" width="40" height="18" fill="url(#cl)"/><rect x="865" y="0" width="40" height="18" fill="url(#cl)"/></g><rect x="714" y="1" width="47" height="46" fill="none" stroke="#2aa6e6" stroke-width="2"/><rect x="18.0" y="0" width="1.3" height="48" fill="#080808"/><rect x="68.0" y="0" width="1.3" height="48" fill="#080808"/><rect x="117.0" y="0" width="1.3" height="48" fill="#080808"/><rect x="166.0" y="0" width="1.3" height="48" fill="#080808"/><rect x="216.0" y="0" width="1.3" height="48" fill="#080808"/><rect x="265.0" y="0" width="1.3" height="48" fill="#080808"/><rect x="315.0" y="0" width="1.3" height="48" fill="#080808"/><rect x="364.0" y="0" width="1.3" height="48" fill="#080808"/><rect x="414.0" y="0" width="1.3" height="48" fill="#080808"/><rect x="464.0" y="0" width="1.3" height="48" fill="#080808"/><rect x="513.0" y="0" width="1.3" height="48" fill="#080808"/><rect x="562.0" y="0" width="1.3" height="48" fill="#080808"/><rect x="612.0" y="0" width="1.3" height="48" fill="#080808"/><rect x="662.0" y="0" width="1.3" height="48" fill="#080808"/><rect x="711.0" y="0" width="1.3" height="48" fill="#080808"/><rect x="761.0" y="0" width="1.3" height="48" fill="#080808"/><rect x="810.0" y="0" width="1.3" height="48" fill="#080808"/><rect x="859.0" y="0" width="1.3" height="48" fill="#080808"/><rect x="908.0" y="0" width="1.3" height="48" fill="#080808"/></svg><svg style="position:absolute;left:8px;top:78px;" width="14" height="17" viewBox="0 0 14 17"><path d="M13.4 8.5H1.8M7.4 1.5L1.5 8.5L7.4 15.5" fill="none" stroke="#fff" stroke-width="2"/></svg><svg style="position:absolute;left:925px;top:77px;" width="14" height="15" viewBox="0 0 14 15"><path d="M8 1H13V6.2Z M6 14H1V8.8Z" fill="#fff"/><path d="M12 2L8.2 5.8M2 13L5.8 9.2" stroke="#fff" stroke-width="1.8"/></svg><svg style="position:absolute;left:7px;top:332px;" width="10" height="16" viewBox="0 0 10 16"><path d="M9.5 0.5V15.5L0.5 8Z" fill="#fff"/></svg><svg style="position:absolute;left:929px;top:332px;" width="10" height="16" viewBox="0 0 10 16"><path d="M0.5 0.5V15.5L9.5 8Z" fill="#fff"/></svg><div style="position:absolute;left:6.8px;top:575px;font-family:'Liberation Sans',sans-serif;font-size:24px;line-height:24px;font-weight:700;color:#fff;white-space:nowrap;transform:scaleX(0.74);transform-origin:0 0;-webkit-text-stroke:0.7px #fff;">Foto 20</div><div style="position:absolute;left:0px;top:668px;width:946px;height:37px;background:#d2e4f1"></div><div style="position:absolute;left:0px;top:668px;width:33px;height:37px;background:#cbe3f1"></div><div style="position:absolute;left:33px;top:668px;width:237px;height:37px;background:#fff"></div><svg style="position:absolute;left:10px;top:678px;" width="12" height="14" viewBox="0 0 12 14"><g fill="#111"><path d="M0 2L5.2 1.2V6.6H0Z"/><path d="M6 1.1L12 0.2V6.6H6Z"/><path d="M0 7.4H5.2V12.8L0 12Z"/><path d="M6 7.4H12V13.8L6 12.9Z"/></g></svg><svg style="position:absolute;left:41px;top:679px;" width="12" height="14" viewBox="0 0 12 14"><ellipse cx="7.6" cy="5" rx="3.8" ry="4.2" fill="none" stroke="#333" stroke-width="1.3"/><path d="M5.2 8.2L0.8 13.2" stroke="#333" stroke-width="1.5"/></svg><div style="position:absolute;left:61px;top:677px;font-family:'Liberation Sans',sans-serif;font-size:13px;line-height:13px;font-weight:400;color:#3a3a3a;white-space:nowrap;transform:scaleX(0.8);transform-origin:0 0;">Digite aqui para pesquisar</div><svg style="position:absolute;left:282px;top:678px;" width="15" height="15" viewBox="0 0 15 15"><rect x="0" y="0" width="15" height="15" fill="#5aa8dc"/><rect x="8" y="1.5" width="5.5" height="12" fill="#9fd0ef"/><circle cx="5" cy="6" r="2.6" fill="#fff"/><path d="M2 10H7" stroke="#fff" stroke-width="1.2"/></svg><div style="position:absolute;left:307px;top:668px;width:33px;height:37px;background:#e4eef6"></div><svg style="position:absolute;left:316px;top:675px;" width="16" height="20" viewBox="0 0 16 20"><path d="M8 10L1.42 5.20A7.6 9.6 0 0 1 14.58 5.20Z" fill="#db4437"/><path d="M8 10L14.58 5.20A7.6 9.6 0 0 1 8.00 19.60Z" fill="#f4c20d"/><path d="M8 10L8.00 19.60A7.6 9.6 0 0 1 1.42 5.20Z" fill="#0f9d58"/><ellipse cx="8" cy="10" rx="3.9" ry="4.9" fill="#fff"/><ellipse cx="8" cy="10" rx="3" ry="3.8" fill="#4285f4"/></svg><svg style="position:absolute;left:349px;top:676.5px;" width="16" height="17" viewBox="0 0 16 17"><rect x="0.5" y="2" width="15" height="14" fill="#f3c242"/><rect x="0.5" y="1" width="7" height="3" fill="#e8a932"/><rect x="3" y="8" width="10" height="7" fill="#3d8fc8"/><rect x="6" y="11" width="4" height="4" fill="#f3c242"/></svg><svg style="position:absolute;left:383px;top:676px;" width="17" height="18" viewBox="0 0 17 18"><path d="M4 2L15 0.5L16.5 15L6 17.5Z" fill="#cfe6f5"/><path d="M1 4L12 2L13.5 16.5L3 18Z" fill="#8cc5ea"/><path d="M1 4L12 2L12.3 5L1.4 7Z" fill="#bfe0f5"/></svg><svg style="position:absolute;left:418px;top:675px;" width="16" height="20" viewBox="0 0 16 20"><rect x="0" y="0" width="16" height="20" fill="#c8662a"/><rect x="1.2" y="1.2" width="13.6" height="17.6" fill="#2c0f04"/><text x="8" y="14" text-anchor="middle" font-family="Liberation Sans" font-weight="700" font-size="9" fill="#f7a03c">Ai</text></svg><div style="position:absolute;left:307px;top:702px;width:33px;height:3px;background:#3f7ab5"></div><div style="position:absolute;left:344px;top:702px;width:27px;height:3px;background:#3f7ab5"></div><div style="position:absolute;left:378px;top:702px;width:27px;height:3px;background:#3f7ab5"></div><div style="position:absolute;left:412px;top:702px;width:28px;height:3px;background:#3f7ab5"></div><svg style="position:absolute;left:667px;top:676.5px;" width="15" height="18" viewBox="0 0 15 18"><defs><radialGradient id="sun" cx="0.4" cy="0.35" r="0.7"><stop offset="0" stop-color="#fde26a"/><stop offset="1" stop-color="#f2a81e"/></radialGradient></defs><ellipse cx="7.5" cy="9" rx="7" ry="8.8" fill="url(#sun)"/></svg><div style="position:absolute;left:689px;top:680px;font-family:'Liberation Sans',sans-serif;font-size:12px;line-height:12px;font-weight:400;color:#2a2a2a;white-space:nowrap;transform:scaleX(0.785);transform-origin:0 0;">18°C&nbsp;&nbsp;Ensolarado</div><svg style="position:absolute;left:773px;top:679px;" width="9" height="7" viewBox="0 0 9 7"><path d="M0.8 6.2L4.5 1.2L8.2 6.2" fill="none" stroke="#222" stroke-width="1.4"/></svg><svg style="position:absolute;left:789px;top:677px;" width="12" height="12" viewBox="0 0 12 12"><rect x="2.5" y="3.5" width="9" height="7" fill="#222"/><rect x="0.5" y="1" width="4" height="4" fill="none" stroke="#222" stroke-width="1"/><rect x="4" y="5" width="6" height="4" fill="#d2e4f1"/></svg><svg style="position:absolute;left:807px;top:678px;" width="10" height="11" viewBox="0 0 10 11"><path d="M1 10A9 9 0 0 1 9.5 1" fill="none" stroke="#444" stroke-width="1.1"/><path d="M3.2 10A6.4 6.4 0 0 1 9.5 3.6" fill="none" stroke="#444" stroke-width="1.1"/><path d="M5.4 10A4 4 0 0 1 9.5 6" fill="none" stroke="#444" stroke-width="1.1"/><circle cx="8.6" cy="9.4" r="1.2" fill="#222"/></svg><svg style="position:absolute;left:821px;top:677px;" width="13" height="13" viewBox="0 0 13 13"><path d="M0.8 4.5H3L6 1.5V11.5L3 8.5H0.8Z" fill="none" stroke="#222" stroke-width="1.1"/><path d="M8 4A3 3 0 0 1 8 9M9.8 2.5A5 5 0 0 1 9.8 10.5M11.6 1A7 7 0 0 1 11.6 12" fill="none" stroke="#222" stroke-width="1"/></svg><div style="position:absolute;left:840px;top:673px;font-family:'Liberation Sans',sans-serif;font-size:11px;line-height:11px;font-weight:400;color:#2a2a2a;white-space:nowrap;transform:scaleX(0.8);transform-origin:0 0;">POR</div><div style="position:absolute;left:840px;top:688.5px;font-family:'Liberation Sans',sans-serif;font-size:11px;line-height:11px;font-weight:400;color:#2a2a2a;white-space:nowrap;transform:scaleX(0.78);transform-origin:0 0;">PTB2</div><div style="position:absolute;left:876px;top:673px;font-family:'Liberation Sans',sans-serif;font-size:11px;line-height:11px;font-weight:400;color:#2a2a2a;white-space:nowrap;transform:scaleX(0.78);transform-origin:0 0;">16:30</div><div style="position:absolute;left:865px;top:688.5px;font-family:'Liberation Sans',sans-serif;font-size:11px;line-height:11px;font-weight:400;color:#2a2a2a;white-space:nowrap;transform:scaleX(0.72);transform-origin:0 0;">18/06/2021</div><svg style="position:absolute;left:917px;top:677px;" width="17" height="22" viewBox="0 0 17 22"><path d="M0.5 0.5H12V9.5H5L2 12.5V9.5H0.5Z" fill="#111"/><path d="M2.5 3H10M2.5 5H10M2.5 7H8" stroke="#d9e5f1" stroke-width="1"/><ellipse cx="11.5" cy="15.5" rx="5" ry="5.8" fill="#d2e4f1" stroke="#777" stroke-width="1"/><text x="11.5" y="19" text-anchor="middle" font-family="Liberation Sans" font-size="9" fill="#222">1</text></svg></div></div></body></html>
